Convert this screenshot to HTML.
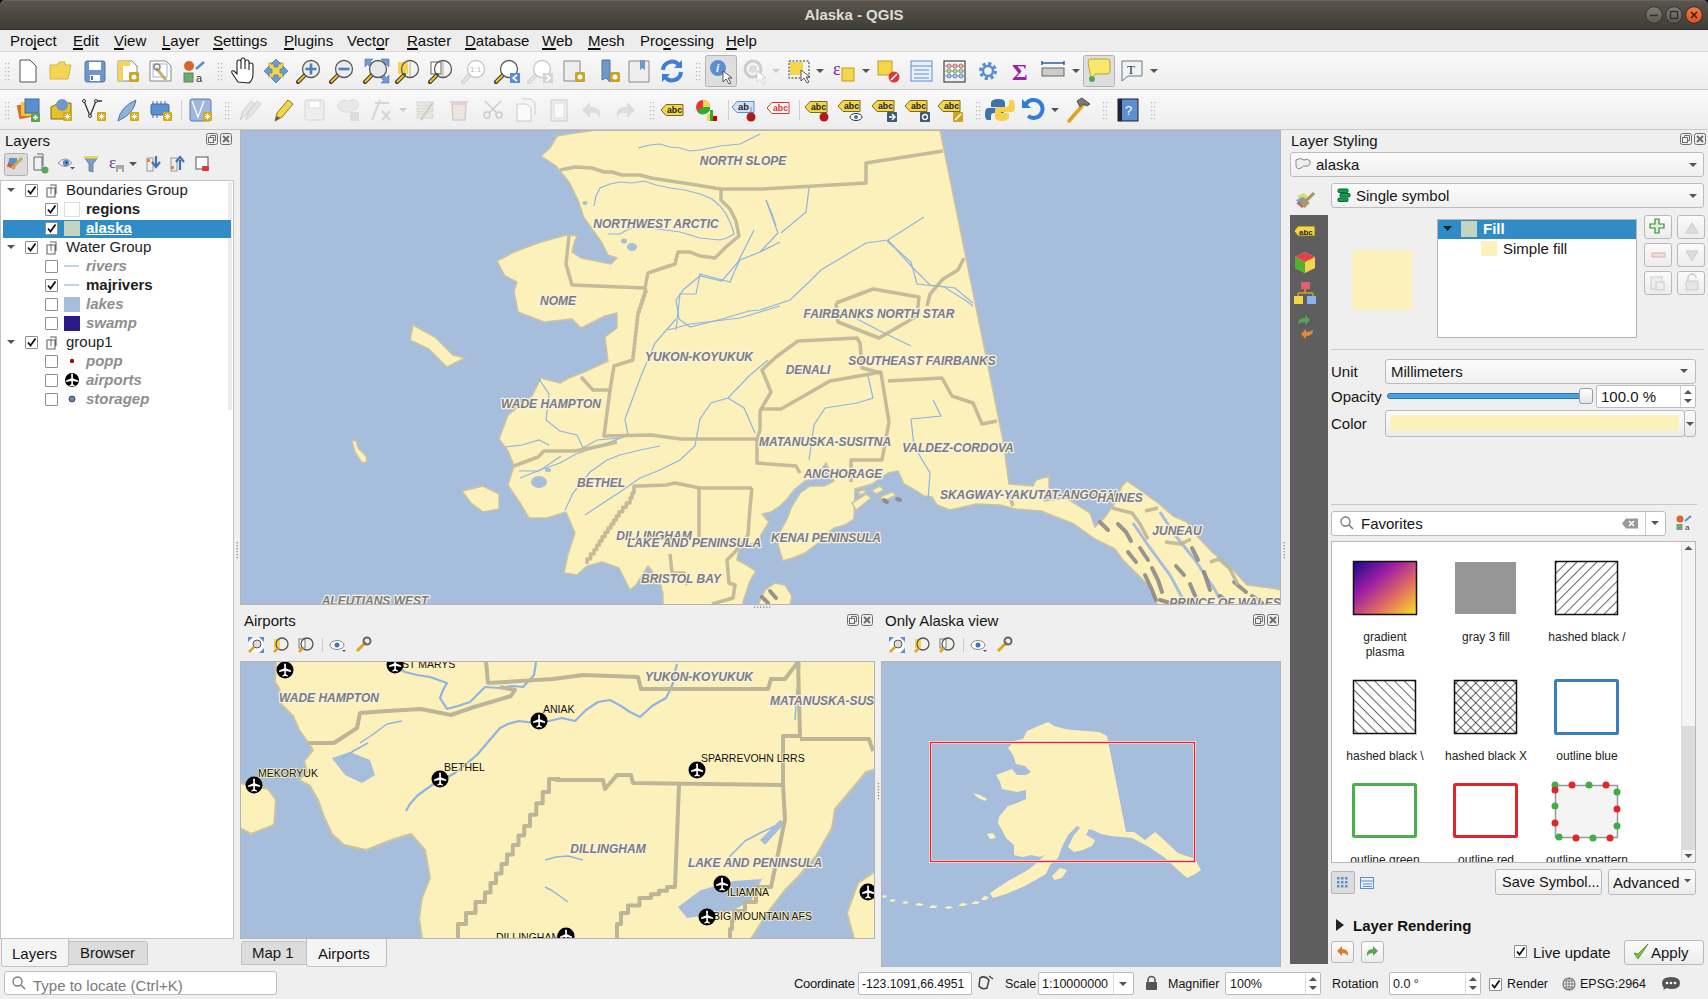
<!DOCTYPE html><html><head><meta charset="utf-8"><style>
*{box-sizing:border-box;margin:0;padding:0}
html,body{width:1708px;height:999px;overflow:hidden;background:#efefef;font-family:"Liberation Sans",sans-serif;font-size:14px;color:#1e1e1e}
.a{position:absolute}
.t{position:absolute;white-space:nowrap;line-height:1}
#title{left:0;top:0;width:1708px;height:30px;background:linear-gradient(#5a564d,#3e3c37);border-radius:5px 5px 0 0;box-shadow:inset 0 1px #67635a,inset 0 -1px #2f2d29}
#menu{left:0;top:30px;width:1708px;height:22px;background:#ededed;border-bottom:1px solid #d9d9d9}
.mi u{text-decoration-thickness:2px;text-underline-offset:2px;text-decoration-skip-ink:none}
.mi{position:absolute;top:3px;font-size:15px;color:#0e0e0e;line-height:1}
.tb{left:0;width:1708px;background:linear-gradient(#f9f9f9,#ededed);border-bottom:1px solid #c6c6c6}
.ttl{font-size:15px;color:#151515}
.lab{font-family:"Liberation Sans",sans-serif;font-size:12px;font-weight:bold;font-style:italic;fill:#7d7c79;stroke:#f4f1e6;stroke-width:2.5px;paint-order:stroke;stroke-linejoin:round}
.apl{font-family:"Liberation Sans",sans-serif;font-size:10.5px;fill:#111;stroke:#fdf1bb;stroke-width:1.5px;paint-order:stroke}
.row{position:absolute;left:2px;width:230px;height:19px}
.cb{position:absolute;width:13px;height:13px;background:#fff;border:1px solid #8e8e8e;border-radius:1px}
.ck{position:absolute;left:1px;top:-3px;font-size:13px;font-weight:bold;color:#111;line-height:1}
.lt{position:absolute;font-size:15px;line-height:1;white-space:nowrap}
.combo{position:absolute;background:linear-gradient(#fbfbfb,#f0f0f0);border:1px solid #bcbcbc;border-radius:3px}
.btn{position:absolute;background:linear-gradient(#fbfbfb,#ececec);border:1px solid #b9b9b9;border-radius:3px}
.field{position:absolute;background:#fff;border:1px solid #bcbcbc;border-radius:2px}
.arr{position:absolute;width:0;height:0;border-left:4px solid transparent;border-right:4px solid transparent;border-top:4px solid #555}
.fs{font-size:15px}
</style></head><body>
<div class="a" style="left:0;top:0;width:1708px;height:10px;background:#000"></div>
<div id="title" class="a"><div class="t" style="left:0;width:1708px;top:7px;text-align:center;color:#dfdbd2;font-size:15px;font-weight:bold">Alaska - QGIS</div><svg class="a" style="left:1641px;top:4px" width="66" height="22"><defs><linearGradient id="wb" x1="0" y1="0" x2="0" y2="1"><stop offset="0" stop-color="#7f7c75"/><stop offset="1" stop-color="#5c5953"/></linearGradient><linearGradient id="wc" x1="0" y1="0" x2="0" y2="1"><stop offset="0" stop-color="#f07a4a"/><stop offset="1" stop-color="#e0501c"/></linearGradient></defs><circle cx="13" cy="11" r="8.3" fill="url(#wb)" stroke="#35332e" stroke-width="1"/><path d="M9 11.5 h8" stroke="#2e2c28" stroke-width="1.4"/><circle cx="33" cy="11" r="8.3" fill="url(#wb)" stroke="#35332e" stroke-width="1"/><rect x="29.5" y="7.5" width="7" height="7" fill="none" stroke="#2e2c28" stroke-width="1.3"/><circle cx="53" cy="11" r="8.3" fill="url(#wc)" stroke="#3a2a22" stroke-width="1"/><path d="M50 8 l6 6 M56 8 l-6 6" stroke="#2a1a10" stroke-width="1.4"/></svg></div>
<div id="menu" class="a">
<span class="mi" style="left:10px">Pro<u>j</u>ect</span>
<span class="mi" style="left:73px"><u>E</u>dit</span>
<span class="mi" style="left:114px"><u>V</u>iew</span>
<span class="mi" style="left:162px"><u>L</u>ayer</span>
<span class="mi" style="left:213px"><u>S</u>ettings</span>
<span class="mi" style="left:284px"><u>P</u>lugins</span>
<span class="mi" style="left:347px">Vect<u>o</u>r</span>
<span class="mi" style="left:407px"><u>R</u>aster</span>
<span class="mi" style="left:465px"><u>D</u>atabase</span>
<span class="mi" style="left:542px"><u>W</u>eb</span>
<span class="mi" style="left:588px"><u>M</u>esh</span>
<span class="mi" style="left:640px">Pro<u>c</u>essing</span>
<span class="mi" style="left:726px"><u>H</u>elp</span>
</div>
<div class="a tb" style="top:52px;height:38px"></div>
<div class="a tb" style="top:90px;height:40px"></div>
<svg class="a" style="left:0;top:52px" width="1708" height="78" viewBox="0 52 1708 78">
<rect x="5" y="63.0" width="1.2" height="1.2" fill="#b5b5b5"/><rect x="8" y="63.0" width="1.2" height="1.2" fill="#b5b5b5"/><rect x="5" y="67.0" width="1.2" height="1.2" fill="#b5b5b5"/><rect x="8" y="67.0" width="1.2" height="1.2" fill="#b5b5b5"/><rect x="5" y="71.0" width="1.2" height="1.2" fill="#b5b5b5"/><rect x="8" y="71.0" width="1.2" height="1.2" fill="#b5b5b5"/><rect x="5" y="75.0" width="1.2" height="1.2" fill="#b5b5b5"/><rect x="8" y="75.0" width="1.2" height="1.2" fill="#b5b5b5"/><rect x="5" y="79.0" width="1.2" height="1.2" fill="#b5b5b5"/><rect x="8" y="79.0" width="1.2" height="1.2" fill="#b5b5b5"/>
<path d="M20 60 h10 l6 6 v16 h-16 Z" fill="#fff" stroke="#555" stroke-width="1"/>
<path d="M50 65 h7 l2 -3 h6 v3 h6 l-3 14 h-18 Z" fill="#f7d554" stroke="#d9b53a"/>
<rect x="85" y="61" width="20" height="21" rx="2" fill="#6f98c9" stroke="#4f77a6"/><rect x="89" y="62" width="12" height="8" fill="#fff"/><rect x="90" y="75" width="10" height="6" fill="#fff"/><rect x="91" y="76" width="2" height="4" fill="#4f77a6"/>
<path d="M118 61 h14 l5 5 v15 h-19 Z" fill="#fff" stroke="#888"/><rect x="118" y="61" width="5" height="20" fill="#f4d45a"/><rect x="118" y="61" width="12" height="5" fill="#f4d45a"/><rect x="129" y="72" width="10" height="10" rx="1.5" fill="#c9a522"/><circle cx="134" cy="77" r="2.5" fill="#fff"/>
<path d="M150 61 h16 l5 5 v15 h-21 Z" fill="#fff" stroke="#888"/><rect x="153" y="64" width="14" height="13" fill="none" stroke="#9db5e8"/><path d="M156 68 l10 12" stroke="#c9b06a" stroke-width="3"/><circle cx="157" cy="67" r="3" fill="none" stroke="#888" stroke-width="1.5"/>
<circle cx="189" cy="66" r="5" fill="#d9652b"/><rect x="184" y="73" width="9" height="9" fill="#72a672" stroke="#5a8a5a"/><path d="M196 69 l8 -7" stroke="#5a8ed0" stroke-width="2.5"/><text x="196" y="82" font-size="11" fill="#333">a</text>
<rect x="218" y="63.0" width="1.2" height="1.2" fill="#b5b5b5"/><rect x="221" y="63.0" width="1.2" height="1.2" fill="#b5b5b5"/><rect x="218" y="67.0" width="1.2" height="1.2" fill="#b5b5b5"/><rect x="221" y="67.0" width="1.2" height="1.2" fill="#b5b5b5"/><rect x="218" y="71.0" width="1.2" height="1.2" fill="#b5b5b5"/><rect x="221" y="71.0" width="1.2" height="1.2" fill="#b5b5b5"/><rect x="218" y="75.0" width="1.2" height="1.2" fill="#b5b5b5"/><rect x="221" y="75.0" width="1.2" height="1.2" fill="#b5b5b5"/><rect x="218" y="79.0" width="1.2" height="1.2" fill="#b5b5b5"/><rect x="221" y="79.0" width="1.2" height="1.2" fill="#b5b5b5"/>
<path d="M238 82 l-6 -9 q-1 -3 2 -2 l3 3 v-12 q0 -2 2 -2 q2 0 2 2 v7 v-9 q0 -2 2 -2 q2 0 2 2 v9 v-7 q0 -2 2 -2 q2 0 2 2 v8 v-5 q0 -2 2 -2 q2 0 2 2 v9 q0 6 -4 9 Z" fill="#fff" stroke="#222" stroke-width="1.1"/>
<rect x="269" y="63" width="14" height="14" fill="#f4d64a" stroke="#c7aa2e"/><path d="M276 59 l5 5 h-3 v3 h-4 v-3 h-3 Z M276 83 l5 -5 h-3 v-3 h-4 v3 h-3 Z M264 71 l5 5 v-3 h3 v-4 h-3 v-3 Z M288 71 l-5 5 v-3 h-3 v-4 h3 v-3 Z" fill="#6f9bd1" stroke="#4d77ab" stroke-width=".7"/>
<path d="M298 82 l7 -7" stroke="#333" stroke-width="4" stroke-linecap="round"/><path d="M298.5 81.5 l6 -6" stroke="#f2c21b" stroke-width="2.2" stroke-linecap="round"/><circle cx="311" cy="69" r="8.5" fill="#ececec" stroke="#5a5a5a" stroke-width="1.3"/><path d="M305.5 69 h11 M311 63.5 v11" stroke="#4a7fc0" stroke-width="2.6"/>
<path d="M331 82 l7 -7" stroke="#333" stroke-width="4" stroke-linecap="round"/><path d="M331.5 81.5 l6 -6" stroke="#f2c21b" stroke-width="2.2" stroke-linecap="round"/><circle cx="344" cy="69" r="8.5" fill="#ececec" stroke="#5a5a5a" stroke-width="1.3"/><path d="M338.5 69 h11" stroke="#4a7fc0" stroke-width="2.6"/>
<path d="M365 59 h8 l-2.5 2.5 l4 4 l-3 3 l-4 -4 l-2.5 2.5 Z M389 59 h-8 l2.5 2.5 l-4 4 l3 3 l4 -4 l2.5 2.5 Z M389 83 h-8 l2.5 -2.5 l-4 -4 l3 -3 l4 4 l2.5 -2.5 Z" fill="#6f9bd1" stroke="#4d77ab" stroke-width=".6"/><path d="M365 82 l7 -7" stroke="#333" stroke-width="4" stroke-linecap="round"/><path d="M365.5 81.5 l6 -6" stroke="#f2c21b" stroke-width="2.2" stroke-linecap="round"/><circle cx="378" cy="69" r="8.5" fill="#e7e7e7" stroke="#5a5a5a" stroke-width="1.3"/>
<rect x="398" y="62" width="10" height="12" fill="#f4d64a"/><path d="M397 82 l7 -7" stroke="#333" stroke-width="4" stroke-linecap="round"/><path d="M397.5 81.5 l6 -6" stroke="#f2c21b" stroke-width="2.2" stroke-linecap="round"/><circle cx="410" cy="69" r="8.5" fill="none" stroke="#5a5a5a" stroke-width="1.3"/><path d="M410 61 v16" stroke="#aaa"/>
<rect x="431" y="62" width="10" height="12" fill="#fff" stroke="#666"/><path d="M430 82 l7 -7" stroke="#333" stroke-width="4" stroke-linecap="round"/><path d="M430.5 81.5 l6 -6" stroke="#f2c21b" stroke-width="2.2" stroke-linecap="round"/><circle cx="443" cy="69" r="8.5" fill="none" stroke="#5a5a5a" stroke-width="1.3"/><path d="M443 61 v16" stroke="#aaa"/>
<path d="M463 82 l7 -7" stroke="#d0d0d0" stroke-width="4" stroke-linecap="round"/><path d="M463.5 81.5 l6 -6" stroke="#e5e5e5" stroke-width="2.2" stroke-linecap="round"/><circle cx="476" cy="69" r="8.5" fill="#fff" stroke="#c8c8c8" stroke-width="1.3"/><text x="470" y="72" font-size="8" fill="#bbb">1:1</text>
<path d="M496 82 l7 -7" stroke="#333" stroke-width="4" stroke-linecap="round"/><path d="M496.5 81.5 l6 -6" stroke="#f2c21b" stroke-width="2.2" stroke-linecap="round"/><circle cx="509" cy="69" r="8.5" fill="#fff" stroke="#5a5a5a" stroke-width="1.3"/><rect x="510" y="73" width="10" height="10" fill="#5b8fcf"/><path d="M517 75 l-4 3 l4 3" stroke="#fff" stroke-width="1.6" fill="none"/>
<path d="M529 82 l7 -7" stroke="#d0d0d0" stroke-width="4" stroke-linecap="round"/><path d="M529.5 81.5 l6 -6" stroke="#e5e5e5" stroke-width="2.2" stroke-linecap="round"/><circle cx="542" cy="69" r="8.5" fill="#fff" stroke="#c8c8c8" stroke-width="1.3"/><rect x="543" y="73" width="10" height="10" fill="#d5d5d5"/><path d="M546 75 l4 3 l-4 3" stroke="#fff" stroke-width="1.6" fill="none"/>
<path d="M564 61 h16 v20 h-16 Z" fill="#eee" stroke="#888"/><rect x="575" y="72" width="10" height="10" rx="1.5" fill="#c9a522"/><circle cx="580" cy="77" r="2.5" fill="#fff"/>
<path d="M602 60 h8 v22 l-4 -4 l-4 2 Z" fill="#6f98c9" stroke="#4f77a6"/><rect x="610" y="72" width="10" height="10" rx="1.5" fill="#c9a522"/><circle cx="615" cy="77" r="2.5" fill="#fff"/>
<path d="M629 61 h20 v21 h-20 Z" fill="#eee" stroke="#888"/><path d="M640 60 h5 v10 l-2.5 -2 l-2.5 2 Z" fill="#6f98c9"/>
<path d="M663 70 a9 9 0 0 1 16 -5" stroke="#3f7fcf" stroke-width="4" fill="none"/><path d="M682 60 v8 h-8 Z" fill="#3f7fcf"/><path d="M681 72 a9 9 0 0 1 -16 5" stroke="#3f7fcf" stroke-width="4" fill="none"/><path d="M662 82 v-8 h8 Z" fill="#3f7fcf"/>
<rect x="696" y="63.0" width="1.2" height="1.2" fill="#b5b5b5"/><rect x="699" y="63.0" width="1.2" height="1.2" fill="#b5b5b5"/><rect x="696" y="67.0" width="1.2" height="1.2" fill="#b5b5b5"/><rect x="699" y="67.0" width="1.2" height="1.2" fill="#b5b5b5"/><rect x="696" y="71.0" width="1.2" height="1.2" fill="#b5b5b5"/><rect x="699" y="71.0" width="1.2" height="1.2" fill="#b5b5b5"/><rect x="696" y="75.0" width="1.2" height="1.2" fill="#b5b5b5"/><rect x="699" y="75.0" width="1.2" height="1.2" fill="#b5b5b5"/><rect x="696" y="79.0" width="1.2" height="1.2" fill="#b5b5b5"/><rect x="699" y="79.0" width="1.2" height="1.2" fill="#b5b5b5"/>
<rect x="705.5" y="55.5" width="31" height="31" rx="2" fill="#dedede" stroke="#b3b3b3"/>
<circle cx="718" cy="68" r="8" fill="#5b8fcf"/><text x="716" y="72" font-size="11" font-style="italic" font-weight="bold" fill="#fff">i</text><path d="M723 71 l0 11 l3 -3 l3 5 l2 -1 l-3 -5 l4 0 Z" fill="#fff" stroke="#333" stroke-width=".8"/>
<circle cx="753" cy="69" r="8" fill="none" stroke="#ccc" stroke-width="3"/><circle cx="753" cy="69" r="4" fill="#ddd"/><path d="M757 71 l0 11 l3 -3 l3 5 l2 -1 l-3 -5 l4 0 Z" fill="#fff" stroke="#ccc" stroke-width=".8"/>
<path d="M772 69 L780 69 L776 73 Z" fill="#ccc"/>
<rect x="789" y="61" width="20" height="17" fill="none" stroke="#333" stroke-dasharray="2 1.5"/><rect x="790" y="62" width="13" height="13" fill="#f4d64a"/><path d="M801 70 l0 11 l3 -3 l3 5 l2 -1 l-3 -5 l4 0 Z" fill="#fff" stroke="#333" stroke-width=".8"/>
<path d="M816 69 L824 69 L820 73 Z" fill="#555"/>
<rect x="842" y="68" width="12" height="13" fill="#f4d64a" stroke="#bfa02a"/><text x="833" y="75" font-size="18" fill="#7b2b8c" font-family="Liberation Serif">ε</text>
<path d="M862 69 L870 69 L866 73 Z" fill="#555"/>
<rect x="878" y="61" width="14" height="14" fill="#f4d64a" stroke="#bfa02a"/><circle cx="894" cy="77" r="5.5" fill="#e0353a"/><path d="M891 80 l6 -6" stroke="#fff" stroke-width="1.6"/>
<rect x="911" y="61" width="21" height="20" fill="#eaf1fb" stroke="#5b8fcf"/><path d="M911 66 h21 M914 70 h15 M914 74 h15 M914 78 h15" stroke="#5b8fcf" stroke-width="1.2"/>
<rect x="944" y="61" width="21" height="21" fill="none" stroke="#444" stroke-width="1.2"/><path d="M944 66 h21" stroke="#888" stroke-width=".8"/><circle cx="949" cy="66" r="2" fill="none" stroke="#e05050"/><circle cx="955" cy="66" r="2" fill="none" stroke="#e05050"/><circle cx="961" cy="66" r="2" fill="none" stroke="#e05050"/><path d="M944 71 h21" stroke="#888" stroke-width=".8"/><circle cx="949" cy="71" r="2" fill="none" stroke="#50b050"/><circle cx="955" cy="71" r="2" fill="none" stroke="#50b050"/><circle cx="961" cy="71" r="2" fill="none" stroke="#50b050"/><path d="M944 76 h21" stroke="#888" stroke-width=".8"/><circle cx="949" cy="76" r="2" fill="none" stroke="#5080d0"/><circle cx="955" cy="76" r="2" fill="none" stroke="#5080d0"/><circle cx="961" cy="76" r="2" fill="none" stroke="#5080d0"/>
<circle cx="988" cy="71" r="7" fill="none" stroke="#5b8fcf" stroke-width="4" stroke-dasharray="3 2.5"/><circle cx="988" cy="71" r="5" fill="none" stroke="#5b8fcf" stroke-width="2.5"/>
<text x="1012" y="80" font-size="24" font-weight="bold" fill="#9b1fa8" font-family="Liberation Serif">Σ</text>
<rect x="1042" y="68" width="22" height="8" fill="#ccc" stroke="#666"/><path d="M1042 63 h22 M1042 61 v4 M1064 61 v4" stroke="#2f5ea8" stroke-width="1.5"/>
<path d="M1072 69 L1080 69 L1076 73 Z" fill="#555"/>
<rect x="1083.5" y="55.5" width="31" height="31" rx="2" fill="#dedede" stroke="#b3b3b3"/>
<path d="M1088 62 q0 -3 3 -3 h16 q3 0 3 3 v9 q0 3 -3 3 h-12 l-4 5 Z" fill="#f8e96a" stroke="#b7a43a"/><circle cx="1092" cy="79" r="3" fill="#5aa35a"/>
<path d="M1122 61 h20 v15 h-14 l-6 5 Z" fill="#eef3f7" stroke="#777"/><text x="1127" y="74" font-size="13" font-family="Liberation Serif" fill="#333">T</text>
<path d="M1150 69 L1158 69 L1154 73 Z" fill="#555"/>
<rect x="5" y="102.0" width="1.2" height="1.2" fill="#b5b5b5"/><rect x="8" y="102.0" width="1.2" height="1.2" fill="#b5b5b5"/><rect x="5" y="106.0" width="1.2" height="1.2" fill="#b5b5b5"/><rect x="8" y="106.0" width="1.2" height="1.2" fill="#b5b5b5"/><rect x="5" y="110.0" width="1.2" height="1.2" fill="#b5b5b5"/><rect x="8" y="110.0" width="1.2" height="1.2" fill="#b5b5b5"/><rect x="5" y="114.0" width="1.2" height="1.2" fill="#b5b5b5"/><rect x="8" y="114.0" width="1.2" height="1.2" fill="#b5b5b5"/><rect x="5" y="118.0" width="1.2" height="1.2" fill="#b5b5b5"/><rect x="8" y="118.0" width="1.2" height="1.2" fill="#b5b5b5"/>
<rect x="18" y="104" width="14" height="14" fill="#e06a2a" transform="rotate(-12 25 111)"/><rect x="21" y="102" width="14" height="14" fill="#f4c63a"/><rect x="25" y="99" width="14" height="14" fill="#5b8fcf" stroke="#3d6aa8"/><rect x="31" y="113" width="9" height="9" rx="1" fill="#5aa35a"/><path d="M35.5 115 v5 M33 117.5 h5" stroke="#fff" stroke-width="1.5"/>
<path d="M51 107 l8 -4 l12 0 v11 l-8 5 h-12 Z" fill="#e6c22a" stroke="#7d6a1a"/><circle cx="62" cy="105" r="6" fill="#6f98c9"/><rect x="63" y="112" width="9" height="9" rx="1" fill="#d4a919"/><path d="M67.5 113.5 v6 M64.5 116.5 h6 M65.3 114.3 l4.4 4.4 M69.7 114.3 l-4.4 4.4" stroke="#fff" stroke-width="1"/>
<path d="M84 101 l6 15 l6 -15 l6 0" stroke="#333" stroke-width="1.3" fill="none"/><circle cx="84" cy="101" r="1.5" fill="#fff" stroke="#333"/><circle cx="90" cy="116" r="1.5" fill="#fff" stroke="#333"/><circle cx="96" cy="101" r="1.5" fill="#fff" stroke="#333"/><rect x="97" y="112" width="9" height="9" rx="1" fill="#d4a919"/><path d="M101.5 113.5 v6 M98.5 116.5 h6 M99.3 114.3 l4.4 4.4 M103.7 114.3 l-4.4 4.4" stroke="#fff" stroke-width="1"/>
<path d="M118 121 q2 -14 18 -21 q-2 14 -18 21 Z" fill="#8fb2de" stroke="#4f77a6"/><rect x="130" y="112" width="9" height="9" rx="1" fill="#d4a919"/><path d="M134.5 113.5 v6 M131.5 116.5 h6 M132.3 114.3 l4.4 4.4 M136.7 114.3 l-4.4 4.4" stroke="#fff" stroke-width="1"/>
<rect x="151" y="104" width="18" height="11" rx="1.5" fill="#5b8fcf" stroke="#3d6aa8"/><path d="M153 101 v3 M157 101 v3 M161 101 v3 M165 101 v3 M153 115 v3 M157 115 v3" stroke="#3d6aa8"/><rect x="163" y="112" width="9" height="9" rx="1" fill="#d4a919"/><path d="M167.5 113.5 v6 M164.5 116.5 h6 M165.3 114.3 l4.4 4.4 M169.7 114.3 l-4.4 4.4" stroke="#fff" stroke-width="1"/>
<rect x="181" y="100.0" width="1" height="20" fill="#d0d0d0"/>
<rect x="190" y="99" width="21" height="22" rx="2" fill="#9db8dc" stroke="#5f7fa8"/><path d="M192 101 l6 16 l6 -16" stroke="#fff" stroke-width="1.3" fill="none"/><rect x="203" y="112" width="9" height="9" rx="1" fill="#d4a919"/><path d="M207.5 113.5 v6 M204.5 116.5 h6 M205.3 114.3 l4.4 4.4 M209.7 114.3 l-4.4 4.4" stroke="#fff" stroke-width="1"/>
<rect x="225" y="102.0" width="1.2" height="1.2" fill="#b5b5b5"/><rect x="228" y="102.0" width="1.2" height="1.2" fill="#b5b5b5"/><rect x="225" y="106.0" width="1.2" height="1.2" fill="#b5b5b5"/><rect x="228" y="106.0" width="1.2" height="1.2" fill="#b5b5b5"/><rect x="225" y="110.0" width="1.2" height="1.2" fill="#b5b5b5"/><rect x="228" y="110.0" width="1.2" height="1.2" fill="#b5b5b5"/><rect x="225" y="114.0" width="1.2" height="1.2" fill="#b5b5b5"/><rect x="228" y="114.0" width="1.2" height="1.2" fill="#b5b5b5"/><rect x="225" y="118.0" width="1.2" height="1.2" fill="#b5b5b5"/><rect x="228" y="118.0" width="1.2" height="1.2" fill="#b5b5b5"/>
<path d="M240 120 l3 -9 l8 -10 l4 3 l-8 10 Z M246 120 l3 -9 l8 -10 l4 3 l-8 10 Z" fill="#e5e5e5" stroke="#d0d0d0"/>
<path d="M275 121 l2 -8 l11 -13 l5 4 l-11 13 Z" fill="#f4d64a" stroke="#8a7522"/><path d="M275 121 l2 -5 l3 2 Z" fill="#555"/>
<rect x="305" y="100" width="19" height="20" rx="2" fill="#eee" stroke="#d5d5d5"/><rect x="309" y="101" width="11" height="7" fill="#fff" stroke="#ddd"/>
<path d="M338 104 q4 -6 10 -3 q6 -3 10 1 q2 6 -4 8 q-6 4 -12 1 q-6 -2 -4 -7 Z" fill="#e8e8e8" stroke="#ddd"/><rect x="350" y="112" width="9" height="9" rx="1" fill="#ddd"/>
<path d="M372 120 l8 -20 M375 103 h14 M382 111 l8 9 M390 111 l-8 9" stroke="#d5d5d5" stroke-width="2" fill="none"/>
<path d="M399 108 L407 108 L403 112 Z" fill="#ccc"/>
<path d="M417 102 h16 v4 h-16 Z M417 108 h16 v4 h-16 Z M417 114 h16 v4 h-16 Z" fill="#e8e8e0" stroke="#d5d5cc"/><path d="M421 120 l12 -18" stroke="#ccc" stroke-width="2"/>
<path d="M450 102 h18 M452 104 h14 l-1 16 h-12 Z" fill="#eee4e0" stroke="#d9c9c4" stroke-width="1.5"/>
<circle cx="487" cy="115" r="3" fill="none" stroke="#ccc" stroke-width="1.5"/><circle cx="499" cy="115" r="3" fill="none" stroke="#ccc" stroke-width="1.5"/><path d="M489 113 l12 -12 M497 113 l-12 -12" stroke="#ccc" stroke-width="1.5"/>
<path d="M517 104 h10 l4 4 v13 h-14 Z" fill="#fafafa" stroke="#ccc"/><path d="M522 99 h9 l4 4 v12" fill="none" stroke="#ccc"/>
<rect x="551" y="100" width="16" height="21" fill="#eee" stroke="#ccc"/><rect x="554" y="103" width="10" height="15" fill="#fafafa" stroke="#ddd"/>
<path d="M600 118 q2 -12 -10 -11 v-5 l-8 8 l8 8 v-5 q8 -1 10 5" fill="#ddd"/>
<path d="M617 118 q-2 -12 10 -11 v-5 l8 8 l-8 8 v-5 q-8 -1 -10 5" fill="#ddd"/>
<rect x="650" y="102.0" width="1.2" height="1.2" fill="#b5b5b5"/><rect x="653" y="102.0" width="1.2" height="1.2" fill="#b5b5b5"/><rect x="650" y="106.0" width="1.2" height="1.2" fill="#b5b5b5"/><rect x="653" y="106.0" width="1.2" height="1.2" fill="#b5b5b5"/><rect x="650" y="110.0" width="1.2" height="1.2" fill="#b5b5b5"/><rect x="653" y="110.0" width="1.2" height="1.2" fill="#b5b5b5"/><rect x="650" y="114.0" width="1.2" height="1.2" fill="#b5b5b5"/><rect x="653" y="114.0" width="1.2" height="1.2" fill="#b5b5b5"/><rect x="650" y="118.0" width="1.2" height="1.2" fill="#b5b5b5"/><rect x="653" y="118.0" width="1.2" height="1.2" fill="#b5b5b5"/>
<path d="M661 110 l5 -5.5 h17 v11 h-17 Z" fill="#f4d64a" stroke="#7a6a20" stroke-width="1"/><text x="667" y="113.2" font-size="8.5" font-weight="bold" fill="#222" textLength="15" lengthAdjust="spacingAndGlyphs">abc</text>
<circle cx="703" cy="107" r="7" fill="#e33"/><path d="M703 107 L703 100 A7 7 0 0 1 710 107 Z" fill="#f4d64a"/><path d="M703 107 L710 107 A7 7 0 0 1 697 111 Z" fill="#3a3"/><rect x="707" y="114" width="3" height="7" fill="#f4d64a"/><rect x="710" y="110" width="3" height="11" fill="#3a3"/><rect x="713" y="116" width="4" height="5" fill="#c00"/>
<rect x="728" y="100.0" width="1" height="20" fill="#d0d0d0"/>
<path d="M732 107 l5 -5.5 h17 v11 h-17 Z" fill="#cfe0f7" stroke="#5b8fcf" stroke-width="1"/><text x="738" y="110.2" font-size="8.5" font-weight="bold" fill="#222" textLength="11" lengthAdjust="spacingAndGlyphs">ab</text><circle cx="751" cy="117" r="4.5" fill="#b01c1c"/><path d="M751 112 v-5" stroke="#888"/>
<path d="M767 108 l5 -5.5 h17 v11 h-17 Z" fill="#fff" stroke="#e03030" stroke-width="1"/><text x="773" y="111.2" font-size="8.5" font-weight="bold" fill="#e03030" textLength="15" lengthAdjust="spacingAndGlyphs">abc</text>
<rect x="799" y="100.0" width="1" height="20" fill="#d0d0d0"/>
<path d="M805 107 l5 -5.5 h17 v11 h-17 Z" fill="#f4d64a" stroke="#7a6a20" stroke-width="1"/><text x="811" y="110.2" font-size="8.5" font-weight="bold" fill="#222" textLength="15" lengthAdjust="spacingAndGlyphs">abc</text><circle cx="824" cy="117" r="4.5" fill="#b01c1c"/>
<path d="M838 106 l5 -5.5 h17 v11 h-17 Z" fill="#f4d64a" stroke="#7a6a20" stroke-width="1"/><text x="844" y="109.2" font-size="8.5" font-weight="bold" fill="#222" textLength="15" lengthAdjust="spacingAndGlyphs">abc</text><ellipse cx="856" cy="117" rx="6" ry="3.5" fill="#fff" stroke="#333"/><circle cx="856" cy="117" r="2" fill="#3f74b8"/>
<path d="M872 106 l5 -5.5 h17 v11 h-17 Z" fill="#f4d64a" stroke="#7a6a20" stroke-width="1"/><text x="878" y="109.2" font-size="8.5" font-weight="bold" fill="#222" textLength="15" lengthAdjust="spacingAndGlyphs">abc</text><rect x="887" y="112" width="10" height="10" rx="1" fill="#3d5a73"/><path d="M889 117 h5 M892 114 l3 3 l-3 3" stroke="#fff" stroke-width="1.5" fill="none"/>
<path d="M905 106 l5 -5.5 h17 v11 h-17 Z" fill="#f4d64a" stroke="#7a6a20" stroke-width="1"/><text x="911" y="109.2" font-size="8.5" font-weight="bold" fill="#222" textLength="15" lengthAdjust="spacingAndGlyphs">abc</text><rect x="920" y="112" width="10" height="10" rx="1" fill="#3d5a73"/><circle cx="925" cy="117" r="2.5" fill="none" stroke="#fff" stroke-width="1.3"/>
<path d="M938 106 l5 -5.5 h17 v11 h-17 Z" fill="#f4d64a" stroke="#7a6a20" stroke-width="1"/><text x="944" y="109.2" font-size="8.5" font-weight="bold" fill="#222" textLength="15" lengthAdjust="spacingAndGlyphs">abc</text><rect x="953" y="112" width="10" height="10" rx="1" fill="#c9a522"/><path d="M955 120 l6 -6" stroke="#fff" stroke-width="1.5"/>
<rect x="976" y="102.0" width="1.2" height="1.2" fill="#b5b5b5"/><rect x="979" y="102.0" width="1.2" height="1.2" fill="#b5b5b5"/><rect x="976" y="106.0" width="1.2" height="1.2" fill="#b5b5b5"/><rect x="979" y="106.0" width="1.2" height="1.2" fill="#b5b5b5"/><rect x="976" y="110.0" width="1.2" height="1.2" fill="#b5b5b5"/><rect x="979" y="110.0" width="1.2" height="1.2" fill="#b5b5b5"/><rect x="976" y="114.0" width="1.2" height="1.2" fill="#b5b5b5"/><rect x="979" y="114.0" width="1.2" height="1.2" fill="#b5b5b5"/><rect x="976" y="118.0" width="1.2" height="1.2" fill="#b5b5b5"/><rect x="979" y="118.0" width="1.2" height="1.2" fill="#b5b5b5"/>
<path d="M999 99 q-8 0 -8 4 v4 h8 v1 h-11 q-3 0 -3 6 q0 6 3 6 h3 v-4 q0 -3 3 -3 h8 q3 0 3 -3 v-7 q0 -4 -6 -4 Z" fill="#3a74b0"/><path d="M1001 121 q8 0 8 -4 v-4 h-8 v-1 h11 q3 0 3 -6 q0 -6 -3 -6 h-3 v4 q0 3 -3 3 h-8 q-3 0 -3 3 v7 q0 4 6 4 Z" fill="#f5d04a"/>
<path d="M1026 104 a9 9 0 1 1 2 12" stroke="#2f7fd8" stroke-width="4" fill="none"/><path d="M1022 99 v9 h9 Z" fill="#2f7fd8"/>
<path d="M1051 108 L1059 108 L1055 112 Z" fill="#555"/>
<path d="M1069 121 l14 -16" stroke="#e0a320" stroke-width="3.5" stroke-linecap="round"/><path d="M1077 101 l5 -3 l8 6 l-3 2 l-4 -2 l-3 3 Z" fill="#777" stroke="#555"/>
<rect x="1103" y="102.0" width="1.2" height="1.2" fill="#b5b5b5"/><rect x="1106" y="102.0" width="1.2" height="1.2" fill="#b5b5b5"/><rect x="1103" y="106.0" width="1.2" height="1.2" fill="#b5b5b5"/><rect x="1106" y="106.0" width="1.2" height="1.2" fill="#b5b5b5"/><rect x="1103" y="110.0" width="1.2" height="1.2" fill="#b5b5b5"/><rect x="1106" y="110.0" width="1.2" height="1.2" fill="#b5b5b5"/><rect x="1103" y="114.0" width="1.2" height="1.2" fill="#b5b5b5"/><rect x="1106" y="114.0" width="1.2" height="1.2" fill="#b5b5b5"/><rect x="1103" y="118.0" width="1.2" height="1.2" fill="#b5b5b5"/><rect x="1106" y="118.0" width="1.2" height="1.2" fill="#b5b5b5"/>
<rect x="1118" y="99" width="20" height="22" fill="#5b8fcf" stroke="#223"/><rect x="1118" y="99" width="4" height="22" fill="#223"/><text x="1125" y="115" font-size="13" fill="#fff">?</text>
<rect x="1151" y="102.0" width="1.2" height="1.2" fill="#b5b5b5"/><rect x="1154" y="102.0" width="1.2" height="1.2" fill="#b5b5b5"/><rect x="1151" y="106.0" width="1.2" height="1.2" fill="#b5b5b5"/><rect x="1154" y="106.0" width="1.2" height="1.2" fill="#b5b5b5"/><rect x="1151" y="110.0" width="1.2" height="1.2" fill="#b5b5b5"/><rect x="1154" y="110.0" width="1.2" height="1.2" fill="#b5b5b5"/><rect x="1151" y="114.0" width="1.2" height="1.2" fill="#b5b5b5"/><rect x="1154" y="114.0" width="1.2" height="1.2" fill="#b5b5b5"/><rect x="1151" y="118.0" width="1.2" height="1.2" fill="#b5b5b5"/><rect x="1154" y="118.0" width="1.2" height="1.2" fill="#b5b5b5"/>
</svg>
<div class="t" style="left:5px;top:133px;font-size:15px;color:#151515;">Layers</div>
<svg class="a" style="left:206px;top:133px" width="26" height="12" viewBox="0 0 26 12"><rect x="0.5" y="0.5" width="11" height="11" rx="2" fill="none" stroke="#6e6e6e"/><rect x="2.5" y="4.5" width="5" height="5" fill="none" stroke="#6e6e6e"/><path d="M4.5 4.5 v-2 h5 v5 h-2" fill="none" stroke="#6e6e6e"/><rect x="14.5" y="0.5" width="11" height="11" rx="2" fill="none" stroke="#6e6e6e"/><path d="M17 3 l6 6 M23 3 l-6 6" stroke="#6e6e6e" stroke-width="2"/></svg>
<svg class="a" style="left:0;top:150px" width="236" height="30" viewBox="0 150 236 30">
<rect x="4.5" y="153.5" width="23" height="22" rx="2" fill="#dcdcdc" stroke="#b0b0b0"/>
<rect x="8" y="160" width="8" height="8" fill="#e05050" transform="rotate(20 12 164)"/><rect x="9" y="158" width="8" height="6" fill="#5b8fcf"/><path d="M12 168 l10 -10" stroke="#c9a94a" stroke-width="3"/>
<path d="M34 157 h8 v13 h-8 Z M37 154 h6 v12" fill="none" stroke="#666"/><circle cx="45" cy="170" r="3.5" fill="#5aa35a"/>
<path d="M58 163 q7 -8 14 0 q-7 7 -14 0 Z" fill="#eee" stroke="#999"/><circle cx="66" cy="163" r="3.2" fill="#5b8fcf"/><circle cx="66.5" cy="162.5" r="1" fill="#223"/><path d="M70 167 h5 l-2.5 2.5 Z" fill="#555"/>
<path d="M84 157 h14 l-5 7 v8 l-4 -1 v-7 Z" fill="#7b9cc6" stroke="#5a7aa6" stroke-width="0.8"/><rect x="84" y="156" width="14" height="2.5" fill="#f4d64a"/>
<text x="109" y="168" font-size="17" fill="#6b3a8c" font-family="Liberation Serif">ε</text><path d="M116 165 h8 v7 h-2 v-3 h-4 v3 h-2 Z" fill="#aaa"/><path d="M129 162 L137 162 L133 166 Z" fill="#555"/>
<rect x="147" y="158" width="6" height="13" fill="none" stroke="#999"/><path d="M156 156 v10 M152 162 l4 5 l4 -5" stroke="#3f74b8" stroke-width="2.2" fill="none"/><rect x="147" y="159" width="3" height="3" fill="#f08030"/>
<rect x="171" y="158" width="6" height="13" fill="none" stroke="#999"/><path d="M180 170 v-10 M176 162 l4 -5 l4 5" stroke="#3f74b8" stroke-width="2.2" fill="none"/><rect x="171" y="166" width="3" height="3" fill="#f08030"/>
<rect x="196" y="157" width="12" height="12" fill="#fff" stroke="#555"/><rect x="202" y="166" width="7" height="5" rx="1" fill="#e0353a"/>
</svg>
<div class="a" style="left:0px;top:180px;width:234px;height:759px;background:#fff;border:1px solid #c4c4c4"></div>
<div class="a" style="left:228px;top:182px;width:4px;height:228px;background:#ececec"></div>
<div class="a" style="left:3px;top:220px;width:228px;height:18px;background:#308cc6"></div>
<div class="cb" style="left:25px;top:184px"><svg width="11" height="11" style="position:absolute;left:0;top:0"><path d="M2 5.5 L4.5 8.5 L9.5 1.5" stroke="#111" stroke-width="1.8" fill="none"/></svg></div>
<div class="lt" style="left:66px;top:182px;">Boundaries Group</div>
<div class="cb" style="left:45px;top:203px"><svg width="11" height="11" style="position:absolute;left:0;top:0"><path d="M2 5.5 L4.5 8.5 L9.5 1.5" stroke="#111" stroke-width="1.8" fill="none"/></svg></div>
<div class="lt" style="left:86px;top:201px;font-weight:bold">regions</div>
<div class="cb" style="left:45px;top:222px"><svg width="11" height="11" style="position:absolute;left:0;top:0"><path d="M2 5.5 L4.5 8.5 L9.5 1.5" stroke="#111" stroke-width="1.8" fill="none"/></svg></div>
<div class="lt" style="left:86px;top:220px;font-weight:bold;color:#fff;text-decoration:underline">alaska</div>
<div class="cb" style="left:25px;top:241px"><svg width="11" height="11" style="position:absolute;left:0;top:0"><path d="M2 5.5 L4.5 8.5 L9.5 1.5" stroke="#111" stroke-width="1.8" fill="none"/></svg></div>
<div class="lt" style="left:66px;top:239px;">Water Group</div>
<div class="cb" style="left:45px;top:260px"></div>
<div class="lt" style="left:86px;top:258px;font-weight:bold;font-style:italic;color:#8e8e8e">rivers</div>
<div class="cb" style="left:45px;top:279px"><svg width="11" height="11" style="position:absolute;left:0;top:0"><path d="M2 5.5 L4.5 8.5 L9.5 1.5" stroke="#111" stroke-width="1.8" fill="none"/></svg></div>
<div class="lt" style="left:86px;top:277px;font-weight:bold">majrivers</div>
<div class="cb" style="left:45px;top:298px"></div>
<div class="lt" style="left:86px;top:296px;font-weight:bold;font-style:italic;color:#8e8e8e">lakes</div>
<div class="cb" style="left:45px;top:317px"></div>
<div class="lt" style="left:86px;top:315px;font-weight:bold;font-style:italic;color:#8e8e8e">swamp</div>
<div class="cb" style="left:25px;top:336px"><svg width="11" height="11" style="position:absolute;left:0;top:0"><path d="M2 5.5 L4.5 8.5 L9.5 1.5" stroke="#111" stroke-width="1.8" fill="none"/></svg></div>
<div class="lt" style="left:66px;top:334px;">group1</div>
<div class="cb" style="left:45px;top:355px"></div>
<div class="lt" style="left:86px;top:353px;font-weight:bold;font-style:italic;color:#8e8e8e">popp</div>
<div class="cb" style="left:45px;top:374px"></div>
<div class="lt" style="left:86px;top:372px;font-weight:bold;font-style:italic;color:#8e8e8e">airports</div>
<div class="cb" style="left:45px;top:393px"></div>
<div class="lt" style="left:86px;top:391px;font-weight:bold;font-style:italic;color:#8e8e8e">storagep</div>
<svg class="a" style="left:0;top:180px" width="236" height="240" viewBox="0 180 236 240">
<path d="M7 188 h8 l-4 4 Z" fill="#555"/>
<path d="M47 188 h8 v9 h-8 Z M50 185 h6 v9" fill="none" stroke="#666" stroke-width="1.1"/><path d="M51 187 v7" stroke="#666"/>
<rect x="64.5" y="202.5" width="15" height="14" fill="#ffffff" stroke="#ddd"/>
<rect x="64.5" y="221.5" width="15" height="14" fill="#c3d4c0" stroke="#c3d4c0"/>
<path d="M7 245 h8 l-4 4 Z" fill="#555"/>
<path d="M47 245 h8 v9 h-8 Z M50 242 h6 v9" fill="none" stroke="#666" stroke-width="1.1"/><path d="M51 244 v7" stroke="#666"/>
<path d="M64 266 h15" stroke="#93b4dc" stroke-width="1.2"/>
<path d="M64 285 h15" stroke="#93b4dc" stroke-width="1.2"/>
<rect x="64.5" y="297.5" width="15" height="14" fill="#a6bedc" stroke="#a6bedc"/>
<rect x="64.5" y="316.5" width="15" height="14" fill="#2c1a86" stroke="#2c1a86"/>
<path d="M7 340 h8 l-4 4 Z" fill="#555"/>
<path d="M47 340 h8 v9 h-8 Z M50 337 h6 v9" fill="none" stroke="#666" stroke-width="1.1"/><path d="M51 339 v7" stroke="#666"/>
<circle cx="72" cy="361" r="2.2" fill="#a01010"/>
<circle cx="72" cy="380" r="7" fill="#000"/><path d="M71.1 374 q0.9 -1.2 1.8 0 v4.2 l5.2 2.2 v1.6 l-5.2 -1 v3.2 l2 1.4 v1 l-2.8 -0.7 l-2.8 0.7 v-1 l2 -1.4 v-3.2 l-5.2 1 v-1.6 l5.2 -2.2 Z" fill="#fff"/>
<circle cx="72" cy="399" r="3" fill="#6f86b8" stroke="#445"/>
</svg>
<div class="a" style="left:68px;top:941px;width:80px;height:24px;background:#dcdcdc;border:1px solid #c2c2c2;border-radius:3px 3px 0 0"></div>
<div class="a" style="left:1px;top:939px;width:68px;height:28px;background:#f4f4f4;border:1px solid #c2c2c2;border-top:none;border-radius:0 0 3px 3px"></div>
<div class="t" style="left:12px;top:946px;font-size:15px;color:#151515;">Layers</div>
<div class="t" style="left:80px;top:945px;font-size:15px;color:#151515;">Browser</div>
<div class="a" style="left:240px;top:130px;width:1041px;height:475px;background:#b4b4b4"></div>
<svg class="a" style="left:241px;top:131px" width="1039" height="473" viewBox="241 131 1039 473">
<rect x="240" y="130" width="1041" height="475" fill="#a6bedc"/>
<polygon points="663,605 663,594 659,579 648,566 636,585 630,590 619,568 602,562 587,566 577,575 564,573 568,554 575,533 566,512 547,518 529,518 520,503 508,485 514,466 508,451 499,439 508,415 532,396 541,378 560,383 569,378 584,372 608,361 605,337 617,328 617,313 605,316 581,328 572,319 544,322 518,312 514,291 517,282 505,276 497,261 514,252 538,243 566,235 578,236 575,240 572,252 581,258 611,264 617,258 608,255 602,243 593,230 584,218 578,200 569,182 556,166 541,156 550,148 557,136 575,133 596,130 940,130 1003,440 1009,484 1033,486 1036,480 1049,476 1049,493 1044,501 1066,498 1090,513 1095,527 1105,517 1115,503 1122,486 1127,481 1140,490 1158,503 1173,516 1187,522 1197,536 1212,552 1227,565 1235,572 1247,585 1271,588 1281,590 1281,605 1158,605 1148,585 1123,560 1115,549 1095,539 1074,524 1041,511 1016,509 1000,505 976,504 950,510 937,505 932,497 924,496 913,489 904,484 898,471 888,473 872,484 855,489 854,519 845,525 834,528 829,532 821,541 805,553 793,558 783,561 778,545 780,532 787,519 792,506 800,493 810,486 824,486 834,481 826,463 819,473 813,479 805,481 795,489 787,499 780,506 771,512 762,514 769,522 762,533 758,541 739,549 737,560 745,564 756,571 750,581 743,602 743,605" fill="#fdf1bb" stroke="#c9c3a6" stroke-width="1.5" stroke-linejoin="round"/>
<polygon points="413,325 410,340 429,349 447,367 465,358 453,355 435,337" fill="#fdf1bb" stroke="#c9c3a6" stroke-width="1.5"/>
<polygon points="462,491 483,486 499,494 499,509 483,512 471,503" fill="#fdf1bb" stroke="#c9c3a6" stroke-width="1.5"/>
<polygon points="352,441 356,440 358,448 366,456 367,462 362,463 355,452" fill="#fdf1bb" stroke="#c9c3a6" stroke-width="1.5"/>
<polygon points="758,605 765,590 775,583 785,585 792,596 790,605" fill="#fdf1bb" stroke="#c9c3a6" stroke-width="1.5"/>
<polygon points="852,503 866,494 871,498 856,510" fill="#fdf1bb" stroke="#c9c3a6" stroke-width="1.5"/>
<polygon points="872,490 880,486 884,490 876,494" fill="#fdf1bb" stroke="#c9c3a6" stroke-width="1.5"/>
<polygon points="858,492 864,489 866,492 860,495" fill="#fdf1bb" stroke="#c9c3a6" stroke-width="1.5"/>
<polygon points="880,497 892,492 896,495 884,501" fill="#fdf1bb" stroke="#c9c3a6" stroke-width="1.5"/>
<ellipse cx="632" cy="247" rx="5" ry="4" fill="#a6bedc"/>
<ellipse cx="624" cy="241" rx="3" ry="2.5" fill="#a6bedc"/>
<ellipse cx="539" cy="482" rx="8" ry="6" fill="#a6bedc"/>
<ellipse cx="548" cy="470" rx="3" ry="2" fill="#a6bedc"/>
<ellipse cx="585" cy="203" rx="2.5" ry="2" fill="#a6bedc"/>
<ellipse cx="1010" cy="520" rx="3" ry="2" fill="#a6bedc"/>
<polyline points="1133,523 1150,548 1170,575 1185,603" fill="none" stroke="#a6bedc" stroke-width="3"/>
<polyline points="1160,512 1175,535 1195,560 1215,590 1222,603" fill="none" stroke="#a6bedc" stroke-width="3"/>
<polyline points="1118,524 1126,532 1131,541" fill="none" stroke="#858585" stroke-width="4" stroke-linecap="round" opacity="0.85"/>
<polyline points="1140,548 1148,560" fill="none" stroke="#858585" stroke-width="4" stroke-linecap="round" opacity="0.85"/>
<polyline points="1152,568 1158,580 1162,592" fill="none" stroke="#858585" stroke-width="4" stroke-linecap="round" opacity="0.85"/>
<polyline points="1128,552 1136,562" fill="none" stroke="#858585" stroke-width="4" stroke-linecap="round" opacity="0.85"/>
<polyline points="1145,575 1152,590 1156,600" fill="none" stroke="#858585" stroke-width="4" stroke-linecap="round" opacity="0.85"/>
<polyline points="1176,566 1184,575" fill="none" stroke="#858585" stroke-width="4" stroke-linecap="round" opacity="0.85"/>
<polyline points="1190,584 1196,598" fill="none" stroke="#858585" stroke-width="4" stroke-linecap="round" opacity="0.85"/>
<polyline points="1192,548 1198,560" fill="none" stroke="#858585" stroke-width="4" stroke-linecap="round" opacity="0.85"/>
<polyline points="1204,572 1210,590" fill="none" stroke="#858585" stroke-width="4" stroke-linecap="round" opacity="0.85"/>
<polyline points="1234,582 1246,592" fill="none" stroke="#858585" stroke-width="4" stroke-linecap="round" opacity="0.85"/>
<polyline points="1252,596 1262,603" fill="none" stroke="#858585" stroke-width="4" stroke-linecap="round" opacity="0.85"/>
<polyline points="1100,522 1108,530" fill="none" stroke="#858585" stroke-width="4" stroke-linecap="round" opacity="0.85"/>
<polyline points="1160,600 1170,603" fill="none" stroke="#858585" stroke-width="4" stroke-linecap="round" opacity="0.85"/>
<polyline points="1220,596 1230,603" fill="none" stroke="#858585" stroke-width="4" stroke-linecap="round" opacity="0.85"/>
<polyline points="884,500 887,502" fill="none" stroke="#858585" stroke-width="4" stroke-linecap="round" opacity="0.85"/>
<polyline points="897,499 900,500" fill="none" stroke="#858585" stroke-width="4" stroke-linecap="round" opacity="0.85"/>
<polyline points="770,591 776,598" fill="none" stroke="#858585" stroke-width="4" stroke-linecap="round" opacity="0.85"/>
<polyline points="762,597 768,603" fill="none" stroke="#858585" stroke-width="4" stroke-linecap="round" opacity="0.85"/>
<polyline points="638,148 650,145 660,144 670,147 680,148 690,151 700,150 710,148 720,146 730,145 740,144 750,139 760,134" fill="none" stroke="#8fb4e3" stroke-width="1.2"/>
<polyline points="594,206 596,196 600,188 610,184 620,182 632,183 644,181 656,185 670,188 685,190 700,194 712,199 720,206 726,214 730,222 733,230 734,234 727,238 720,240 710,239 700,238 690,235 680,232 665,230 650,228 640,228 632,228 625,231 620,234 608,234" fill="none" stroke="#8fb4e3" stroke-width="1.2"/>
<polyline points="766,200 772,214 776,226" fill="none" stroke="#8fb4e3" stroke-width="1.2"/>
<polyline points="780,242 760,252 740,260 735,270 730,282 715,278 700,274 698,284 696,294 688,294 680,294 678,312 676,330" fill="none" stroke="#8fb4e3" stroke-width="1.2"/>
<polyline points="780,306 760,312 740,318 715,321 690,324 668,330" fill="none" stroke="#8fb4e3" stroke-width="1.2"/>
<polyline points="766,200 778,233 760,252" fill="none" stroke="#8fb4e3" stroke-width="1.2"/>
<polyline points="809,188 806,212 781,233" fill="none" stroke="#8fb4e3" stroke-width="1.2"/>
<polyline points="924,217 888,240 866,243 821,270 809,282 790,300 760,310 749,311 722,319 690,327 679,319 676,300 684,289 700,276 722,281 738,262 754,230" fill="none" stroke="#8fb4e3" stroke-width="1.2"/>
<polyline points="888,240 912,267 930,285 955,288 973,303" fill="none" stroke="#8fb4e3" stroke-width="1.2"/>
<polyline points="676,319 655,343 641,376 625,419 628,435 600,446 576,454 560,463 540,470 520,478" fill="none" stroke="#8fb4e3" stroke-width="1.2"/>
<polyline points="887,241 911,262 917,284 944,287 965,300 973,306" fill="none" stroke="#8fb4e3" stroke-width="1.2"/>
<polyline points="857,319 884,333 911,346" fill="none" stroke="#8fb4e3" stroke-width="1.2"/>
<polyline points="768,360 749,376 728,398 711,403 700,419 695,446 680,460 660,470 640,478 620,492 600,505 585,515" fill="none" stroke="#8fb4e3" stroke-width="1.2"/>
<polyline points="728,398 744,408 755,433" fill="none" stroke="#8fb4e3" stroke-width="1.2"/>
<polyline points="868,376 873,398 857,403 825,408 814,425 809,460" fill="none" stroke="#8fb4e3" stroke-width="1.2"/>
<polyline points="539,379 549,394 546,420 560,431 577,435 583,448 597,440 620,438" fill="none" stroke="#8fb4e3" stroke-width="1.2"/>
<polyline points="505,447 522,445 539,440 549,445" fill="none" stroke="#8fb4e3" stroke-width="1.2"/>
<polyline points="519,471 539,471 561,456" fill="none" stroke="#8fb4e3" stroke-width="1.2"/>
<polyline points="565,510 573,493 590,472 607,460 620,455 640,450 660,446" fill="none" stroke="#8fb4e3" stroke-width="1.2"/>
<polyline points="933,400 941,416 911,419 914,446 930,473 928,500" fill="none" stroke="#8fb4e3" stroke-width="1.2"/>
<polyline points="560,170 575,167 592,168 604,172 612,172 622,175 640,175 651,178 690,184 721,189 760,189 866,183 866,163 943,151" fill="none" stroke="#bdb597" stroke-width="3.5" stroke-linejoin="round" opacity="0.9"/>
<polyline points="721,189 721,200 730,209 736,221 739,236 727,246 715,258 700,256 690,252 678,252 675,264 648,273 645,288 572,285 566,264 569,236" fill="none" stroke="#bdb597" stroke-width="3.5" stroke-linejoin="round" opacity="0.9"/>
<polyline points="645,288 646,292 644.7,292 644.7,296.0 643.3,296.0 643.3,300.0 642.0,300.0 642.0,304.0 640.7,304.0 640.7,308.0 639.3,308.0 639.3,312.0 638.0,312.0 638.0,316.0 637.5,316.0 637.5,320.0 637.1,320.0 637.1,324.0 636.6,324.0 636.6,328.0 636.2,328.0 636.2,332.0 635.7,332.0 635.7,336.0 635.3,336.0 635.3,340.0 634.8,340.0 634.8,344.0 634.4,344.0 634.4,348.0 633.9,348.0 633.9,352.0 633.5,352.0 633.5,356.0 633.0,356.0 633.0,360.0 614,366 610,390 593,390 581,377" fill="none" stroke="#bdb597" stroke-width="3.5" stroke-linejoin="round" opacity="0.9"/>
<polyline points="610,390 604,436 651,435 681,439 757,439 760,430 760,411 771,392 762,370 776,357 798,341 857,338 860,343 862,368 881,373 889,422 882,460 851,460 851,482" fill="none" stroke="#bdb597" stroke-width="3.5" stroke-linejoin="round" opacity="0.9"/>
<polyline points="514,466 538,457 544,451 575,451 605,445 617,442" fill="none" stroke="#bdb597" stroke-width="3.5" stroke-linejoin="round" opacity="0.9"/>
<polyline points="760,409 781,409 830,381 882,372" fill="none" stroke="#bdb597" stroke-width="3.5" stroke-linejoin="round" opacity="0.9"/>
<polyline points="888,381 942,378 952,396 973,403 982,424 997,421" fill="none" stroke="#bdb597" stroke-width="3.5" stroke-linejoin="round" opacity="0.9"/>
<polyline points="836,303 873,289 919,297 917,316 879,338 838,322 836,303" fill="none" stroke="#bdb597" stroke-width="3.5" stroke-linejoin="round" opacity="0.9"/>
<polyline points="964,258 958,270 943,279 930,294 927,306" fill="none" stroke="#bdb597" stroke-width="3.5" stroke-linejoin="round" opacity="0.9"/>
<polyline points="757,439 757,463 796,466 800,473" fill="none" stroke="#bdb597" stroke-width="3.5" stroke-linejoin="round" opacity="0.9"/>
<polyline points="640,486 634.0,486 634.0,493.0 632.0,493.0 632.0,498.0 630.0,498.0 630.0,503.0 626.3,503.0 626.3,507.3 622.7,507.3 622.7,511.7 619.0,511.7 619.0,516.0 616.3,516.0 616.3,520.0 613.7,520.0 613.7,524.0 611.0,524.0 611.0,528.0 608.0,528.0 608.0,532.3 605.0,532.3 605.0,536.7 602.0,536.7 602.0,541.0 599.3,541.0 599.3,545.3 596.7,545.3 596.7,549.7 594.0,549.7 594.0,554.0 590.5,554.0 590.5,559.0 587.0,559.0 587.0,564.0" fill="none" stroke="#bdb597" stroke-width="3.5" stroke-linejoin="round" opacity="0.9"/>
<polyline points="640,486 666,485 675,483 700,488 752,488" fill="none" stroke="#bdb597" stroke-width="3.5" stroke-linejoin="round" opacity="0.9"/>
<polyline points="699,488 699,537" fill="none" stroke="#bdb597" stroke-width="3.5" stroke-linejoin="round" opacity="0.9"/>
<polyline points="752,488 750,507 748,535 735,552 727,560 729,583 735,585 733,598 712,604" fill="none" stroke="#bdb597" stroke-width="3.5" stroke-linejoin="round" opacity="0.9"/>
<polyline points="670,554 672,573 684,573 687,585" fill="none" stroke="#bdb597" stroke-width="3.5" stroke-linejoin="round" opacity="0.9"/>
<polyline points="1009,494 1013,506" fill="none" stroke="#bdb597" stroke-width="3.5" stroke-linejoin="round" opacity="0.9"/>
<polyline points="1112,508 1132,513 1140,524 1148,539" fill="none" stroke="#bdb597" stroke-width="3.5" stroke-linejoin="round" opacity="0.9"/>
<polyline points="1145,511 1158,508" fill="none" stroke="#bdb597" stroke-width="3.5" stroke-linejoin="round" opacity="0.9"/>
<polyline points="1165,542 1181,544 1191,539" fill="none" stroke="#bdb597" stroke-width="3.5" stroke-linejoin="round" opacity="0.9"/>
<polyline points="1210,562 1219,559 1230,569 1238,585" fill="none" stroke="#bdb597" stroke-width="3.5" stroke-linejoin="round" opacity="0.9"/>
<text x="743" y="165" text-anchor="middle" class="lab">NORTH SLOPE</text>
<text x="656" y="228" text-anchor="middle" class="lab">NORTHWEST ARCTIC</text>
<text x="558" y="305" text-anchor="middle" class="lab">NOME</text>
<text x="879" y="318" text-anchor="middle" class="lab">FAIRBANKS NORTH STAR</text>
<text x="699" y="361" text-anchor="middle" class="lab">YUKON-KOYUKUK</text>
<text x="922" y="365" text-anchor="middle" class="lab">SOUTHEAST FAIRBANKS</text>
<text x="808" y="374" text-anchor="middle" class="lab">DENALI</text>
<text x="551" y="408" text-anchor="middle" class="lab">WADE HAMPTON</text>
<text x="825" y="446" text-anchor="middle" class="lab">MATANUSKA-SUSITNA</text>
<text x="958" y="452" text-anchor="middle" class="lab">VALDEZ-CORDOVA</text>
<text x="843" y="478" text-anchor="middle" class="lab">ANCHORAGE</text>
<text x="601" y="487" text-anchor="middle" class="lab">BETHEL</text>
<text x="1028" y="499" text-anchor="middle" class="lab">SKAGWAY-YAKUTAT-ANGOON</text>
<text x="1120" y="502" text-anchor="middle" class="lab">HAINES</text>
<text x="1177" y="535" text-anchor="middle" class="lab">JUNEAU</text>
<text x="654" y="540" text-anchor="middle" class="lab">DILLINGHAM</text>
<text x="694" y="547" text-anchor="middle" class="lab">LAKE AND PENINSULA</text>
<text x="826" y="542" text-anchor="middle" class="lab">KENAI PENINSULA</text>
<text x="681" y="583" text-anchor="middle" class="lab">BRISTOL BAY</text>
<text x="375" y="605" text-anchor="middle" class="lab">ALEUTIANS WEST</text>
<text x="1225" y="607" text-anchor="middle" class="lab">PRINCE OF WALES</text>
</svg>
<div class="a" style="left:240px;top:661px;width:635px;height:278px;background:#b4b4b4"></div>
<svg class="a" style="left:241px;top:662px" width="633" height="276" viewBox="241 662 633 276">
<rect x="240" y="660" width="640" height="280" fill="#a6bedc"/>
<polygon points="276,661 275,682 279,688 282,705 293,716 299,730 307,741 313,750 304,761 307,772 299,780 310,786 318,800 324,817 332,834 344,845 366,850 394,839 411,834 425,850 430,878 422,898 419,918 422,939 751,939 768,912 785,890 799,876 816,856 832,828 835,809 852,789 866,772 876,769 876,661" fill="#fdf1bb" stroke="#c9c3a6" stroke-width="2" stroke-linejoin="round"/>
<polygon points="876,871 858,883 847,913 854,939 876,939" fill="#fdf1bb" stroke="#c9c3a6" stroke-width="2" stroke-linejoin="round"/>
<polygon points="240,783 268,789 276,800 274,825 251,834 240,828" fill="#fdf1bb" stroke="#c9c3a6" stroke-width="2" stroke-linejoin="round"/>
<polygon points="678,907 701,890 734,881 762,879 751,901 729,912 687,918" fill="#a6bedc"/>
<polygon points="332,758 350,752 370,760 375,775 362,783 345,775" fill="#a6bedc"/>
<polygon points="760,840 780,820 785,823 765,845" fill="#a6bedc"/>
<polyline points="398,668 405,672 417,675 430,677 447,683 443,690 440,698 447,709 458,706 470,702 478,694 485,687 500,688 512,686 523,687 534,675 536,662" fill="none" stroke="#8fb4e3" stroke-width="2.2" stroke-linejoin="round"/>
<polyline points="406,811 410,804 417,796 425,790 432,785 442,780 455,773 466,764 477,755 488,742 500,728 508,724 519,721 535,723 549,721 562,718 575,721 586,710 598,702 610,700 621,706 630,712 640,717 652,706 666,698 670,690 673,683 675,672 677,664" fill="none" stroke="#8fb4e3" stroke-width="2.2" stroke-linejoin="round"/>
<polyline points="360,743 372,735 387,724 402,721" fill="none" stroke="#8fb4e3" stroke-width="1.5" stroke-linejoin="round"/>
<polyline points="342,758 355,750 368,743" fill="none" stroke="#8fb4e3" stroke-width="1.5" stroke-linejoin="round"/>
<polyline points="545,860 556,857 568,856 583,860" fill="none" stroke="#8fb4e3" stroke-width="1.5" stroke-linejoin="round"/>
<polyline points="545,887 551,890 557,894 568,902" fill="none" stroke="#8fb4e3" stroke-width="1.5" stroke-linejoin="round"/>
<polyline points="726,860 735,851 745,841 760,833 775,826" fill="none" stroke="#8fb4e3" stroke-width="1.5" stroke-linejoin="round"/>
<polyline points="800,663 797,690 795,720" fill="none" stroke="#8fb4e3" stroke-width="1.5" stroke-linejoin="round"/>
<polyline points="308,743 334,743 357,728 360,713 387,711 421,709 451,715 474,707 511,696 515,690 500,687" fill="none" stroke="#bdb597" stroke-width="4" stroke-linejoin="round"/>
<polyline points="486,661 488,683 553,679 583,675 638,677 641,689 768,689 771,679 785,679 798,662" fill="none" stroke="#bdb597" stroke-width="4" stroke-linejoin="round"/>
<polyline points="798,662 800,736 783,736 783,785 785,819 779,849 771,887 771,887 756.0,887 756.0,902.0 745.0,902.0 745.0,911.0 734.0,911.0 734.0,920.0 732.0,920.0 732.0,929.0 730.0,929.0 730.0,938.0" fill="none" stroke="#bdb597" stroke-width="4" stroke-linejoin="round"/>
<polyline points="800,739 869,739 873,751" fill="none" stroke="#bdb597" stroke-width="4" stroke-linejoin="round"/>
<polyline points="560,779 549.0,779 549.0,792.0 542.7,792.0 542.7,803.3 536.3,803.3 536.3,814.7 530.0,814.7 530.0,826.0 524.2,826.0 524.2,835.5 518.5,835.5 518.5,845.0 512.8,845.0 512.8,854.5 507.0,854.5 507.0,864.0 501.5,864.0 501.5,873.5 496.0,873.5 496.0,883.0 490.5,883.0 490.5,892.5 485.0,892.5 485.0,902.0 475.5,902.0 475.5,913.0 466.0,913.0 466.0,924.0 458.0,924.0 458.0,938.0" fill="none" stroke="#bdb597" stroke-width="4" stroke-linejoin="round"/>
<polyline points="555,780 603,780 605,789 617,775 631,775 633,783 783,785" fill="none" stroke="#bdb597" stroke-width="4" stroke-linejoin="round"/>
<polyline points="679,785 675,887 675,887 667.0,887 667.0,890.7 659.0,890.7 659.0,894.3 651.0,894.3 651.0,898.0 639.5,898.0 639.5,905.5 628.0,905.5 628.0,913.0 621.0,913.0 621.0,924.0 617.0,924.0 617.0,938.0" fill="none" stroke="#bdb597" stroke-width="4" stroke-linejoin="round"/>
<text x="329" y="702" text-anchor="middle" class="lab">WADE HAMPTON</text>
<text x="699" y="681" text-anchor="middle" class="lab">YUKON-KOYUKUK</text>
<text x="822" y="705" text-anchor="middle" class="lab">MATANUSKA-SUS</text>
<text x="608" y="853" text-anchor="middle" class="lab">DILLINGHAM</text>
<text x="755" y="867" text-anchor="middle" class="lab">LAKE AND PENINSULA</text>
<circle cx="285" cy="670" r="8.5" fill="#000"/><path d="M284.1 664 q0.9 -1.2 1.8 0 v4.2 l5.2 2.2 v1.6 l-5.2 -1 v3.2 l2 1.4 v1 l-2.8 -0.7 l-2.8 0.7 v-1 l2 -1.4 v-3.2 l-5.2 1 v-1.6 l5.2 -2.2 Z" fill="#fff"/>
<text x="402" y="668" class="apl">ST MARYS</text>
<circle cx="395" cy="665" r="8.5" fill="#000"/><path d="M394.1 659 q0.9 -1.2 1.8 0 v4.2 l5.2 2.2 v1.6 l-5.2 -1 v3.2 l2 1.4 v1 l-2.8 -0.7 l-2.8 0.7 v-1 l2 -1.4 v-3.2 l-5.2 1 v-1.6 l5.2 -2.2 Z" fill="#fff"/>
<text x="543" y="713" class="apl">ANIAK</text>
<circle cx="539" cy="721" r="8.5" fill="#000"/><path d="M538.1 715 q0.9 -1.2 1.8 0 v4.2 l5.2 2.2 v1.6 l-5.2 -1 v3.2 l2 1.4 v1 l-2.8 -0.7 l-2.8 0.7 v-1 l2 -1.4 v-3.2 l-5.2 1 v-1.6 l5.2 -2.2 Z" fill="#fff"/>
<text x="444" y="771" class="apl">BETHEL</text>
<circle cx="440" cy="779" r="8.5" fill="#000"/><path d="M439.1 773 q0.9 -1.2 1.8 0 v4.2 l5.2 2.2 v1.6 l-5.2 -1 v3.2 l2 1.4 v1 l-2.8 -0.7 l-2.8 0.7 v-1 l2 -1.4 v-3.2 l-5.2 1 v-1.6 l5.2 -2.2 Z" fill="#fff"/>
<text x="258" y="777" class="apl">MEKORYUK</text>
<circle cx="254" cy="785" r="8.5" fill="#000"/><path d="M253.1 779 q0.9 -1.2 1.8 0 v4.2 l5.2 2.2 v1.6 l-5.2 -1 v3.2 l2 1.4 v1 l-2.8 -0.7 l-2.8 0.7 v-1 l2 -1.4 v-3.2 l-5.2 1 v-1.6 l5.2 -2.2 Z" fill="#fff"/>
<text x="701" y="762" class="apl">SPARREVOHN LRRS</text>
<circle cx="697" cy="770" r="8.5" fill="#000"/><path d="M696.1 764 q0.9 -1.2 1.8 0 v4.2 l5.2 2.2 v1.6 l-5.2 -1 v3.2 l2 1.4 v1 l-2.8 -0.7 l-2.8 0.7 v-1 l2 -1.4 v-3.2 l-5.2 1 v-1.6 l5.2 -2.2 Z" fill="#fff"/>
<text x="727" y="896" class="apl">ILIAMNA</text>
<circle cx="722" cy="884" r="8.5" fill="#000"/><path d="M721.1 878 q0.9 -1.2 1.8 0 v4.2 l5.2 2.2 v1.6 l-5.2 -1 v3.2 l2 1.4 v1 l-2.8 -0.7 l-2.8 0.7 v-1 l2 -1.4 v-3.2 l-5.2 1 v-1.6 l5.2 -2.2 Z" fill="#fff"/>
<text x="713" y="920" class="apl">BIG MOUNTAIN AFS</text>
<circle cx="707" cy="917" r="8.5" fill="#000"/><path d="M706.1 911 q0.9 -1.2 1.8 0 v4.2 l5.2 2.2 v1.6 l-5.2 -1 v3.2 l2 1.4 v1 l-2.8 -0.7 l-2.8 0.7 v-1 l2 -1.4 v-3.2 l-5.2 1 v-1.6 l5.2 -2.2 Z" fill="#fff"/>
<text x="496" y="941" class="apl">DILLINGHAM</text>
<circle cx="566" cy="936" r="8.5" fill="#000"/><path d="M565.1 930 q0.9 -1.2 1.8 0 v4.2 l5.2 2.2 v1.6 l-5.2 -1 v3.2 l2 1.4 v1 l-2.8 -0.7 l-2.8 0.7 v-1 l2 -1.4 v-3.2 l-5.2 1 v-1.6 l5.2 -2.2 Z" fill="#fff"/>
<circle cx="868" cy="892" r="8.5" fill="#000"/><path d="M867.1 886 q0.9 -1.2 1.8 0 v4.2 l5.2 2.2 v1.6 l-5.2 -1 v3.2 l2 1.4 v1 l-2.8 -0.7 l-2.8 0.7 v-1 l2 -1.4 v-3.2 l-5.2 1 v-1.6 l5.2 -2.2 Z" fill="#fff"/>
</svg>
<div class="a" style="left:881px;top:661px;width:400px;height:306px;background:#b4b4b4"></div>
<svg class="a" style="left:882px;top:662px" width="398" height="305" viewBox="882 662 398 305">
<rect x="880" y="660" width="402" height="310" fill="#a6bedc"/>
<polygon points="1023,739 1027,731 1036,727 1048,722 1054,726 1065,729 1073,730 1099,732 1107,736 1126,832 1134,832 1145,840 1155,832 1164,840 1178,853 1195,859 1201,870 1195,874 1187,878 1178,870 1164,857 1149,847 1132,838 1111,836 1101,834 1095,831 1089,829 1086,835 1095,840 1092,846 1083,850 1074,852 1068,847 1074,835 1080,828 1077,826 1068,835 1062,847 1058,858 1050,865 1046,874 1025,886 1006,894 993,898 990,893 1008,881 1028,870 1034,865 1044,856 1048,854 1040,857 1031,855 1023,857 1014,855 1014,845 1006,838 1002,830 998,823 999,817 1008,806 1017,803 1026,799 1026,790 1017,792 1002,789 1000,782 996,775 1012,769 1017,775 1026,775 1031,772 1025,766 1016,764 1013,755 1008,748 1014,741" fill="#fdf1bb"/>
<polygon points="984,896 989,897 986,900 981,900" fill="#fdf1bb"/>
<polygon points="975,901 980,902 977,904 971,904" fill="#fdf1bb"/>
<polygon points="962,903 968,904 964,906 958,906" fill="#fdf1bb"/>
<polygon points="948,906 953,907 950,909 944,908" fill="#fdf1bb"/>
<polygon points="932,905 938,906 935,908 929,908" fill="#fdf1bb"/>
<polygon points="918,903 924,904 921,906 915,905" fill="#fdf1bb"/>
<polygon points="905,901 909,902 906,904 902,903" fill="#fdf1bb"/>
<polygon points="892,899 896,900 893,902 889,901" fill="#fdf1bb"/>
<polygon points="884,895 887,896 885,898 882,897" fill="#fdf1bb"/>
<polygon points="973,793 980,795 987,799 985,801 978,798" fill="#fdf1bb"/>
<polygon points="987,834 993,833 996,838 990,839" fill="#fdf1bb"/>
<polygon points="1052,876 1060,868 1067,870 1062,878 1054,880" fill="#fdf1bb"/>
<rect x="930.5" y="742.5" width="264" height="119" fill="none" stroke="#fff" stroke-width="3"/>
<rect x="930.5" y="742.5" width="264" height="119" fill="none" stroke="#e3262b" stroke-width="1.5"/>
</svg>
<div class="t" style="left:244px;top:613px;font-size:15px;color:#151515;">Airports</div>
<svg class="a" style="left:847px;top:614px" width="26" height="12" viewBox="0 0 26 12"><rect x="0.5" y="0.5" width="11" height="11" rx="2" fill="none" stroke="#6e6e6e"/><rect x="2.5" y="4.5" width="5" height="5" fill="none" stroke="#6e6e6e"/><path d="M4.5 4.5 v-2 h5 v5 h-2" fill="none" stroke="#6e6e6e"/><rect x="14.5" y="0.5" width="11" height="11" rx="2" fill="none" stroke="#6e6e6e"/><path d="M17 3 l6 6 M23 3 l-6 6" stroke="#6e6e6e" stroke-width="2"/></svg>
<div class="t" style="left:885px;top:613px;font-size:15px;color:#151515;">Only Alaska view</div>
<svg class="a" style="left:1253px;top:614px" width="26" height="12" viewBox="0 0 26 12"><rect x="0.5" y="0.5" width="11" height="11" rx="2" fill="none" stroke="#6e6e6e"/><rect x="2.5" y="4.5" width="5" height="5" fill="none" stroke="#6e6e6e"/><path d="M4.5 4.5 v-2 h5 v5 h-2" fill="none" stroke="#6e6e6e"/><rect x="14.5" y="0.5" width="11" height="11" rx="2" fill="none" stroke="#6e6e6e"/><path d="M17 3 l6 6 M23 3 l-6 6" stroke="#6e6e6e" stroke-width="2"/></svg>
<svg class="a" style="left:244px;top:633px" width="130" height="24" viewBox="244 633 130 24"><rect x="249" y="638" width="14" height="14" fill="#fff"/><path d="M248 637 h5 l-5 5 Z M264 637 h-5 l5 5 Z M264 653 h-5 l5 -5 Z" fill="#5b8fcf"/><circle cx="257" cy="644" r="4" fill="#ddd" stroke="#555"/><path d="M249 652 l5 -5" stroke="#e0a320" stroke-width="2.5"/><rect x="274" y="639" width="6" height="9" fill="#f4d64a"/><circle cx="282" cy="644" r="6" fill="none" stroke="#555" stroke-width="1.3"/><path d="M274 652 l4 -4" stroke="#e0a320" stroke-width="2.5"/><rect x="299" y="639" width="6" height="9" fill="#fff" stroke="#777"/><circle cx="307" cy="644" r="6" fill="none" stroke="#555" stroke-width="1.3"/><path d="M299 652 l4 -4" stroke="#e0a320" stroke-width="2.5"/><rect x="322" y="638" width="1" height="14" fill="#ccc"/><ellipse cx="337" cy="645" rx="7" ry="4.5" fill="#fff" stroke="#888"/><circle cx="337" cy="645" r="2.5" fill="#3f74b8"/><path d="M342 650 l2 2 l2 -2" fill="#555"/><path d="M357 651 l9 -9" stroke="#e0a320" stroke-width="3"/><circle cx="367" cy="641" r="3.5" fill="none" stroke="#666" stroke-width="2"/></svg>
<svg class="a" style="left:885px;top:633px" width="130" height="24" viewBox="885 633 130 24"><rect x="890" y="638" width="14" height="14" fill="#fff"/><path d="M889 637 h5 l-5 5 Z M905 637 h-5 l5 5 Z M905 653 h-5 l5 -5 Z" fill="#5b8fcf"/><circle cx="898" cy="644" r="4" fill="#ddd" stroke="#555"/><path d="M890 652 l5 -5" stroke="#e0a320" stroke-width="2.5"/><rect x="915" y="639" width="6" height="9" fill="#f4d64a"/><circle cx="923" cy="644" r="6" fill="none" stroke="#555" stroke-width="1.3"/><path d="M915 652 l4 -4" stroke="#e0a320" stroke-width="2.5"/><rect x="940" y="639" width="6" height="9" fill="#fff" stroke="#777"/><circle cx="948" cy="644" r="6" fill="none" stroke="#555" stroke-width="1.3"/><path d="M940 652 l4 -4" stroke="#e0a320" stroke-width="2.5"/><rect x="963" y="638" width="1" height="14" fill="#ccc"/><ellipse cx="978" cy="645" rx="7" ry="4.5" fill="#fff" stroke="#888"/><circle cx="978" cy="645" r="2.5" fill="#3f74b8"/><path d="M983 650 l2 2 l2 -2" fill="#555"/><path d="M998 651 l9 -9" stroke="#e0a320" stroke-width="3"/><circle cx="1008" cy="641" r="3.5" fill="none" stroke="#666" stroke-width="2"/></svg>
<div class="a" style="left:241px;top:941px;width:66px;height:24px;background:#dcdcdc;border:1px solid #c2c2c2;border-radius:3px 3px 0 0"></div>
<div class="a" style="left:306px;top:939px;width:81px;height:28px;background:#f4f4f4;border:1px solid #c2c2c2;border-top:none;border-radius:0 0 3px 3px"></div>
<div class="t" style="left:252px;top:945px;font-size:15px;color:#151515;">Map 1</div>
<div class="t" style="left:318px;top:946px;font-size:15px;color:#151515;">Airports</div>
<div class="t" style="left:1291px;top:133px;font-size:15px;color:#151515;">Layer Styling</div>
<svg class="a" style="left:1680px;top:133px" width="26" height="12" viewBox="0 0 26 12"><rect x="0.5" y="0.5" width="11" height="11" rx="2" fill="none" stroke="#6e6e6e"/><rect x="2.5" y="4.5" width="5" height="5" fill="none" stroke="#6e6e6e"/><path d="M4.5 4.5 v-2 h5 v5 h-2" fill="none" stroke="#6e6e6e"/><rect x="14.5" y="0.5" width="11" height="11" rx="2" fill="none" stroke="#6e6e6e"/><path d="M17 3 l6 6 M23 3 l-6 6" stroke="#6e6e6e" stroke-width="2"/></svg>
<div class="combo" style="left:1290px;top:152px;width:414px;height:25px"></div>
<svg class="a" style="left:1294px;top:157px" width="18" height="14"><path d="M2 3 q5 -3 8 0 q4 -2 6 1 q1 4 -2 5 q-5 -1 -7 2 q-4 2 -5 -2 Z" fill="#eee" stroke="#888"/></svg>
<div class="t" style="left:1316px;top:157px;font-size:15px;color:#151515;">alaska</div>
<div class="arr" style="left:1689px;top:163px"></div>
<svg class="a" style="left:1294px;top:186px" width="24" height="24" viewBox="1294 186 24 24"><path d="M1297 196 l7 -3 l6 6 l-7 4 Z" fill="#d6dc6a"/><path d="M1296 200 l7 -3 l5 5 l-7 4 Z" fill="#5b8fcf" opacity=".8"/><path d="M1296 203 l6 -2 l5 4 l-5 3 Z" fill="#c84050" opacity=".8"/><path d="M1303 204 l11 -11" stroke="#a89060" stroke-width="3"/><rect x="1301" y="199" width="7" height="7" fill="#a89a70" transform="rotate(45 1304 203)"/></svg>
<div class="combo" style="left:1331px;top:183px;width:373px;height:25px"></div>
<svg class="a" style="left:1337px;top:187px" width="16" height="16"><rect x="1" y="2" width="10" height="3.5" rx="1" fill="#10a040" stroke="#064"/><rect x="3" y="6.5" width="10" height="3.5" rx="1" fill="#10a040" stroke="#064"/><rect x="1" y="11" width="10" height="3.5" rx="1" fill="#10a040" stroke="#064"/></svg>
<div class="t" style="left:1356px;top:188px;font-size:15px;color:#151515;">Single symbol</div>
<div class="arr" style="left:1689px;top:194px"></div>
<div class="a" style="left:1290px;top:215px;width:38px;height:749px;background:#5e5e5e"></div>
<svg class="a" style="left:1290px;top:215px" width="38" height="130" viewBox="1290 215 38 130"><path d="M1294 231 l4 -5 h17 v10 h-17 Z" fill="#f4d64a" stroke="#7a6a20"/><text x="1299" y="235" font-size="8" font-weight="bold" fill="#222">abc</text><path d="M1305 252 l10 5 v11 l-10 5 l-10 -5 v-11 Z" fill="#f4d64a"/><path d="M1305 252 l10 5 l-10 5 l-10 -5 Z" fill="#e04050"/><path d="M1295 257 l10 5 v11 l-10 -5 Z" fill="#50b030"/><rect x="1301" y="282" width="9" height="7" fill="#e06070"/><path d="M1305 289 v4 M1298 293 h15 M1298 293 v3 M1313 293 v3" stroke="#c9a522" stroke-width="1.5"/><rect x="1294" y="296" width="9" height="8" fill="#f4d64a"/><rect x="1307" y="296" width="9" height="8" fill="#8ab4e8"/><path d="M1298 324 q0 -6 7 -6 v-3 l5 5 l-5 5 v-3 q-4 0 -7 2 Z" fill="#5aa35a"/><path d="M1313 330 q0 6 -7 6 v3 l-5 -5 l5 -5 v3 q4 0 7 -2 Z" fill="#e08a3a"/></svg>
<div class="a" style="left:1352px;top:250px;width:60px;height:60px;background:#fdf1bb"></div>
<div class="a" style="left:1437px;top:219px;width:200px;height:119px;background:#fff;border:1px solid #b5b5b5"></div>
<div class="a" style="left:1438px;top:220px;width:198px;height:19px;background:#308cc6"></div>
<svg class="a" style="left:1442px;top:225px" width="12" height="8"><path d="M1 1 h9 l-4.5 5 Z" fill="#222"/></svg>
<div class="a" style="left:1461px;top:221px;width:16px;height:16px;background:#c3d4c0"></div>
<div class="t" style="left:1483px;top:221px;font-size:15px;color:#fff;font-weight:bold">Fill</div>
<div class="a" style="left:1481px;top:241px;width:16px;height:15px;background:#fdf1bb"></div>
<div class="t" style="left:1503px;top:241px;font-size:15px;color:#151515;">Simple fill</div>
<div class="btn" style="left:1644px;top:215px;width:28px;height:24px"></div>
<div class="btn" style="left:1677px;top:215px;width:28px;height:24px"></div>
<div class="btn" style="left:1644px;top:243px;width:28px;height:24px"></div>
<div class="btn" style="left:1677px;top:243px;width:28px;height:24px"></div>
<div class="btn" style="left:1644px;top:271px;width:28px;height:24px"></div>
<div class="btn" style="left:1677px;top:271px;width:28px;height:24px"></div>
<svg class="a" style="left:1644px;top:215px" width="62" height="80" viewBox="1638 215 62 80"><path d="M1649 219 h4 v5 h5 v4 h-5 v5 h-4 v-5 h-5 v-4 h5 Z" fill="#dff0d8" stroke="#3a8a3a" stroke-width="1.2"/><path d="M1680 233 l6 -10 l6 10 Z" fill="#ddd" stroke="#ccc"/><rect x="1646" y="253" width="13" height="4" fill="#f2dcdc" stroke="#e0b0b0"/><path d="M1680 251 l6 10 l6 -10 Z" fill="#ddd" stroke="#ccc"/><rect x="1645" y="277" width="11" height="12" fill="#eee" stroke="#ccc"/><rect x="1650" y="282" width="8" height="8" fill="#eee" stroke="#ccc"/><rect x="1680" y="281" width="12" height="9" rx="1" fill="#e5e5e5" stroke="#ccc"/><path d="M1682 281 v-3 a4 4 0 0 1 8 0" fill="none" stroke="#ccc" stroke-width="1.5"/></svg>
<div class="a" style="left:1331px;top:349px;width:373px;height:1px;background:#c8c8c8"></div>
<div class="t" style="left:1331px;top:364px;font-size:15px;color:#151515;">Unit</div>
<div class="combo" style="left:1385px;top:359px;width:311px;height:25px"></div>
<div class="t" style="left:1391px;top:364px;font-size:15px;color:#151515;">Millimeters</div>
<div class="arr" style="left:1680px;top:369px"></div>
<div class="t" style="left:1331px;top:389px;font-size:15px;color:#151515;">Opacity</div>
<div class="a" style="left:1387px;top:393px;width:198px;height:6px;background:#4aa2e4;border:1px solid #2f74b2;border-radius:3px"></div>
<div class="a" style="left:1579px;top:388px;width:14px;height:16px;background:linear-gradient(#fff,#e5e5e5);border:1px solid #9a9a9a;border-radius:3px"></div>
<div class="field" style="left:1596px;top:385px;width:100px;height:23px"></div>
<div class="t" style="left:1601px;top:389px;font-size:15px;color:#151515;">100.0 %</div>
<div class="a" style="left:1680px;top:386px;width:1px;height:21px;background:#d0d0d0"></div>
<svg class="a" style="left:1682px;top:388px" width="12" height="18"><path d="M2 6 l4 -4 l4 4 Z M2 11 l4 4 l4 -4 Z" fill="#555"/></svg>
<div class="t" style="left:1331px;top:416px;font-size:15px;color:#151515;">Color</div>
<div class="btn" style="left:1385px;top:410px;width:300px;height:27px"></div>
<div class="a" style="left:1390px;top:415px;width:289px;height:16px;background:#fdf1bb;border-radius:2px"></div>
<div class="btn" style="left:1684px;top:410px;width:12px;height:27px"></div>
<div class="arr" style="left:1686px;top:422px;border-left-width:4px;border-right-width:4px"></div>
<div class="a" style="left:1331px;top:504px;width:366px;height:1px;background:#c8c8c8"></div>
<div class="field" style="left:1331px;top:511px;width:335px;height:25px;border-radius:3px"></div>
<svg class="a" style="left:1339px;top:515px" width="16" height="16"><circle cx="6.5" cy="6.5" r="4.5" fill="none" stroke="#777" stroke-width="1.3"/><path d="M10 10 l4 4" stroke="#777" stroke-width="1.5"/></svg>
<div class="t" style="left:1361px;top:516px;font-size:15px;color:#151515;">Favorites</div>
<svg class="a" style="left:1621px;top:517px" width="18" height="13"><path d="M1 6.5 l4 -5 h12 v10 h-12 Z" fill="#999"/><path d="M8 4 l5 5 M13 4 l-5 5" stroke="#fff" stroke-width="1.5"/></svg>
<div class="a" style="left:1645px;top:512px;width:1px;height:23px;background:#ccc"></div>
<div class="arr" style="left:1651px;top:521px"></div>
<svg class="a" style="left:1675px;top:514px" width="18" height="18"><circle cx="5" cy="5" r="3.5" fill="#d9652b"/><rect x="1.5" y="10" width="6" height="6" fill="#72a672"/><path d="M10 7 l6 -5" stroke="#5a8ed0" stroke-width="2"/><text x="10" y="16" font-size="8" fill="#333">a</text></svg>
<div class="a" style="left:1331px;top:541px;width:365px;height:322px;background:#fff;border:1px solid #b8b8b8"></div>
<div class="a" style="left:1681px;top:542px;width:14px;height:320px;background:#f4f4f4;border-left:1px solid #ddd"></div>
<div class="a" style="left:1682px;top:726px;width:13px;height:124px;background:#dcdcdc"></div>
<svg class="a" style="left:1682px;top:542px" width="13" height="320"><path d="M2.5 8 l4 -4 l4 4 Z" fill="#555"/><path d="M2.5 312 l4 4 l4 -4 Z" fill="#555"/></svg>
<svg class="a" style="left:1332px;top:542px" width="349" height="320" viewBox="1332 542 349 320"><defs><linearGradient id="plasma" x1="0" y1="0" x2="1" y2="1"><stop offset="0" stop-color="#1a0a8c"/><stop offset="0.35" stop-color="#9c1fa3"/><stop offset="0.65" stop-color="#e06a63"/><stop offset="1" stop-color="#f9e51f"/></linearGradient><pattern id="hf" width="7" height="7" patternUnits="userSpaceOnUse" patternTransform="rotate(45)"><path d="M0 0 v7" stroke="#000" stroke-width="1.2"/></pattern><pattern id="hb" width="7" height="7" patternUnits="userSpaceOnUse" patternTransform="rotate(-45)"><path d="M0 0 v7" stroke="#000" stroke-width="1.2"/></pattern></defs><rect x="1353.5" y="561.5" width="63" height="53" fill="url(#plasma)" stroke="#111" stroke-width="1.5"/><rect x="1455" y="562" width="61" height="52" fill="#969696"/><rect x="1555.5" y="561.5" width="62" height="53" fill="url(#hf)" stroke="#111" stroke-width="1.5"/><rect x="1353.5" y="680.5" width="62" height="53" fill="url(#hb)" stroke="#111" stroke-width="1.5"/><rect x="1454.5" y="680.5" width="62" height="53" fill="url(#hb)" stroke="#111" stroke-width="1.5"/><rect x="1454.5" y="680.5" width="62" height="53" fill="url(#hf)"/><rect x="1555.5" y="680.5" width="62" height="53" fill="none" stroke="#3a7ebf" stroke-width="3" rx="1"/><rect x="1353.5" y="784.5" width="62" height="52" fill="none" stroke="#4cae4c" stroke-width="3" rx="1"/><rect x="1454.5" y="784.5" width="62" height="52" fill="none" stroke="#e0262a" stroke-width="3" rx="1"/><rect x="1555.5" y="785.5" width="62" height="52" fill="#f4f4f4" stroke="#999" stroke-width="1.5"/><circle cx="1555" cy="785" r="3.5" fill="#3fae49"/><circle cx="1572" cy="785" r="3.5" fill="#e0262a"/><circle cx="1589" cy="785" r="3.5" fill="#3fae49"/><circle cx="1606" cy="785" r="3.5" fill="#e0262a"/><circle cx="1555" cy="790" r="3.5" fill="#e0262a"/><circle cx="1617" cy="792" r="3.5" fill="#3fae49"/><circle cx="1555" cy="806" r="3.5" fill="#3fae49"/><circle cx="1617" cy="809" r="3.5" fill="#e0262a"/><circle cx="1555" cy="823" r="3.5" fill="#e0262a"/><circle cx="1617" cy="826" r="3.5" fill="#3fae49"/><circle cx="1559" cy="837" r="3.5" fill="#3fae49"/><circle cx="1576" cy="838" r="3.5" fill="#e0262a"/><circle cx="1593" cy="838" r="3.5" fill="#3fae49"/><circle cx="1610" cy="838" r="3.5" fill="#e0262a"/><text x="1385" y="641" text-anchor="middle" font-size="12" fill="#222">gradient</text><text x="1385" y="656" text-anchor="middle" font-size="12" fill="#222">plasma</text><text x="1486" y="641" text-anchor="middle" font-size="12" fill="#222">gray 3 fill</text><text x="1587" y="641" text-anchor="middle" font-size="12" fill="#222">hashed black /</text><text x="1385" y="760" text-anchor="middle" font-size="12" fill="#222">hashed black \</text><text x="1486" y="760" text-anchor="middle" font-size="12" fill="#222">hashed black X</text><text x="1587" y="760" text-anchor="middle" font-size="12" fill="#222">outline blue</text><text x="1385" y="864" text-anchor="middle" font-size="12" fill="#222">outline green</text><text x="1486" y="864" text-anchor="middle" font-size="12" fill="#222">outline red</text><text x="1587" y="864" text-anchor="middle" font-size="12" fill="#222">outline xpattern</text></svg>
<div class="a" style="left:1331px;top:871px;width:24px;height:23px;background:#dcdcdc;border:1px solid #b5b5b5;border-radius:2px"></div>
<svg class="a" style="left:1334px;top:874px" width="48" height="18"><g fill="#5b8fcf"><rect x="3" y="3" width="2.5" height="2.5"/><rect x="3" y="7" width="2.5" height="2.5"/><rect x="3" y="11" width="2.5" height="2.5"/><rect x="7" y="3" width="2.5" height="2.5"/><rect x="7" y="7" width="2.5" height="2.5"/><rect x="7" y="11" width="2.5" height="2.5"/><rect x="11" y="3" width="2.5" height="2.5"/><rect x="11" y="7" width="2.5" height="2.5"/><rect x="11" y="11" width="2.5" height="2.5"/></g><rect x="26.5" y="3.5" width="13" height="11" fill="#eaf1fb" stroke="#5b8fcf"/><path d="M27 7 h12 M29 10 h9 M29 12.5 h9" stroke="#5b8fcf"/></svg>
<div class="btn" style="left:1495px;top:869px;width:107px;height:26px"></div>
<div class="t" style="left:1502px;top:875px;font-size:14.5px;color:#151515;">Save Symbol...</div>
<div class="btn" style="left:1608px;top:869px;width:88px;height:26px"></div>
<div class="t" style="left:1613px;top:875px;font-size:15px;color:#151515;">Advanced</div>
<svg class="a" style="left:1684px;top:879px" width="8" height="6"><path d="M0 0 h7 l-3.5 3.5 Z" fill="#555"/></svg>
<svg class="a" style="left:1334px;top:918px" width="12" height="14"><path d="M2 1 l8 6 l-8 6 Z" fill="#222"/></svg>
<div class="t" style="left:1353px;top:918px;font-size:15px;color:#111;font-weight:bold">Layer Rendering</div>
<div class="btn" style="left:1331px;top:941px;width:23px;height:22px"></div>
<div class="btn" style="left:1361px;top:941px;width:23px;height:22px"></div>
<svg class="a" style="left:1331px;top:941px" width="54" height="22"><path d="M17 15 q1 -7 -6 -7 v-3 l-5 5 l5 5 v-3 q4 0 6 3" fill="#e07a2a"/><path d="M36 15 q-1 -7 6 -7 v-3 l5 5 l-5 5 v-3 q-4 0 -6 3" fill="#5aa35a"/></svg>
<div class="cb" style="left:1514px;top:945px"><svg width="11" height="11" style="position:absolute;left:0;top:0"><path d="M2 5.5 L4.5 8.5 L9.5 1.5" stroke="#111" stroke-width="1.8" fill="none"/></svg></div>
<div class="t" style="left:1533px;top:945px;font-size:15px;color:#151515;">Live update</div>
<div class="btn" style="left:1624px;top:940px;width:80px;height:25px"></div>
<svg class="a" style="left:1633px;top:943px" width="16" height="18"><path d="M1 10 l4 6 l10 -15 l-10 10 Z" fill="#7cc53a" stroke="#4a8a1a" stroke-width=".8"/></svg>
<div class="t" style="left:1651px;top:945px;font-size:15px;color:#151515;">Apply</div>
<div class="field" style="left:4px;top:971px;width:273px;height:24px;border-radius:3px;border-color:#c0c0c0"></div>
<svg class="a" style="left:11px;top:975px" width="16" height="16"><circle cx="6.5" cy="6.5" r="4.5" fill="none" stroke="#777" stroke-width="1.3"/><path d="M10 10 l4 4" stroke="#777" stroke-width="1.5"/></svg>
<div class="t" style="left:33px;top:978px;font-size:15px;color:#7c7c7c;">Type to locate (Ctrl+K)</div>
<div class="t" style="left:794px;top:977px;font-size:13px;color:#151515;letter-spacing:-0.3px">Coordinate</div>
<div class="field" style="left:858px;top:972px;width:114px;height:23px"></div>
<div class="t" style="left:862px;top:978px;font-size:12.2px;color:#151515;">-123.1091,66.4951</div>
<svg class="a" style="left:976px;top:974px" width="18" height="18"><path d="M4 4 q5 -3 9 2 l-2 8 q-5 2 -8 -2 Z" fill="none" stroke="#444" stroke-width="1.5"/><path d="M13 2 l4 3" stroke="#444" stroke-width="1.3"/></svg>
<div class="t" style="left:1005px;top:978px;font-size:12.5px;color:#151515;">Scale</div>
<div class="field" style="left:1038px;top:972px;width:96px;height:23px"></div>
<div class="t" style="left:1042px;top:978px;font-size:12.5px;color:#151515;">1:10000000</div>
<div class="a" style="left:1113px;top:973px;width:1px;height:21px;background:#ddd"></div>
<div class="arr" style="left:1119px;top:982px"></div>
<svg class="a" style="left:1145px;top:975px" width="14" height="16"><rect x="1" y="7" width="11" height="8" rx="1" fill="#555"/><path d="M3 7 v-2 a3.5 3.5 0 0 1 7 0 v2" fill="none" stroke="#555" stroke-width="1.6"/></svg>
<div class="t" style="left:1168px;top:978px;font-size:12.5px;color:#151515;">Magnifier</div>
<div class="field" style="left:1225px;top:972px;width:96px;height:23px"></div>
<div class="t" style="left:1230px;top:978px;font-size:12.5px;color:#151515;">100%</div>
<div class="a" style="left:1305px;top:973px;width:1px;height:21px;background:#ddd"></div>
<svg class="a" style="left:1307px;top:975px" width="12" height="18"><path d="M2 6 l4 -4 l4 4 Z M2 11 l4 4 l4 -4 Z" fill="#555"/></svg>
<div class="t" style="left:1332px;top:978px;font-size:12.5px;color:#151515;">Rotation</div>
<div class="field" style="left:1389px;top:972px;width:92px;height:23px"></div>
<div class="t" style="left:1393px;top:978px;font-size:12.5px;color:#151515;">0.0 °</div>
<div class="a" style="left:1465px;top:973px;width:1px;height:21px;background:#ddd"></div>
<svg class="a" style="left:1467px;top:975px" width="12" height="18"><path d="M2 6 l4 -4 l4 4 Z M2 11 l4 4 l4 -4 Z" fill="#555"/></svg>
<div class="cb" style="left:1489px;top:978px"><svg width="11" height="11" style="position:absolute;left:0;top:0"><path d="M2 5.5 L4.5 8.5 L9.5 1.5" stroke="#111" stroke-width="1.8" fill="none"/></svg></div>
<div class="t" style="left:1507px;top:978px;font-size:12.5px;color:#151515;">Render</div>
<svg class="a" style="left:1561px;top:976px" width="16" height="16"><circle cx="8" cy="8" r="6" fill="none" stroke="#777" stroke-width="1.2"/><path d="M2 8 h12 M8 2 v12 M3.5 5 h9 M3.5 11 h9" stroke="#777" stroke-width=".9"/><ellipse cx="8" cy="8" rx="3" ry="6" fill="none" stroke="#777" stroke-width=".9"/></svg>
<div class="t" style="left:1580px;top:978px;font-size:12.5px;color:#151515;">EPSG:2964</div>
<svg class="a" style="left:1661px;top:975px" width="20" height="18"><path d="M3 13 q-2 -2 -2 -5 q0 -6 9 -6 q9 0 9 6 q0 6 -9 6 q-2 0 -4 -1 l-4 2 Z" fill="#555"/><circle cx="6" cy="8" r="1.3" fill="#fff"/><circle cx="10" cy="8" r="1.3" fill="#fff"/><circle cx="14" cy="8" r="1.3" fill="#fff"/></svg>
<svg class="a" style="left:0;top:0" width="1708" height="999"><rect x="236.5" y="542" width="1.3" height="1.3" fill="#8a8a8a"/><rect x="877.8" y="783" width="1.3" height="1.3" fill="#8a8a8a"/><rect x="1283.5" y="542" width="1.3" height="1.3" fill="#8a8a8a"/><rect x="754" y="606.5" width="1.3" height="1.3" fill="#8a8a8a"/><rect x="236.5" y="545" width="1.3" height="1.3" fill="#8a8a8a"/><rect x="877.8" y="786" width="1.3" height="1.3" fill="#8a8a8a"/><rect x="1283.5" y="545" width="1.3" height="1.3" fill="#8a8a8a"/><rect x="757" y="606.5" width="1.3" height="1.3" fill="#8a8a8a"/><rect x="236.5" y="548" width="1.3" height="1.3" fill="#8a8a8a"/><rect x="877.8" y="789" width="1.3" height="1.3" fill="#8a8a8a"/><rect x="1283.5" y="548" width="1.3" height="1.3" fill="#8a8a8a"/><rect x="760" y="606.5" width="1.3" height="1.3" fill="#8a8a8a"/><rect x="236.5" y="551" width="1.3" height="1.3" fill="#8a8a8a"/><rect x="877.8" y="792" width="1.3" height="1.3" fill="#8a8a8a"/><rect x="1283.5" y="551" width="1.3" height="1.3" fill="#8a8a8a"/><rect x="763" y="606.5" width="1.3" height="1.3" fill="#8a8a8a"/><rect x="236.5" y="554" width="1.3" height="1.3" fill="#8a8a8a"/><rect x="877.8" y="795" width="1.3" height="1.3" fill="#8a8a8a"/><rect x="1283.5" y="554" width="1.3" height="1.3" fill="#8a8a8a"/><rect x="766" y="606.5" width="1.3" height="1.3" fill="#8a8a8a"/><rect x="236.5" y="557" width="1.3" height="1.3" fill="#8a8a8a"/><rect x="877.8" y="798" width="1.3" height="1.3" fill="#8a8a8a"/><rect x="1283.5" y="557" width="1.3" height="1.3" fill="#8a8a8a"/><rect x="769" y="606.5" width="1.3" height="1.3" fill="#8a8a8a"/></svg>
</body></html>
